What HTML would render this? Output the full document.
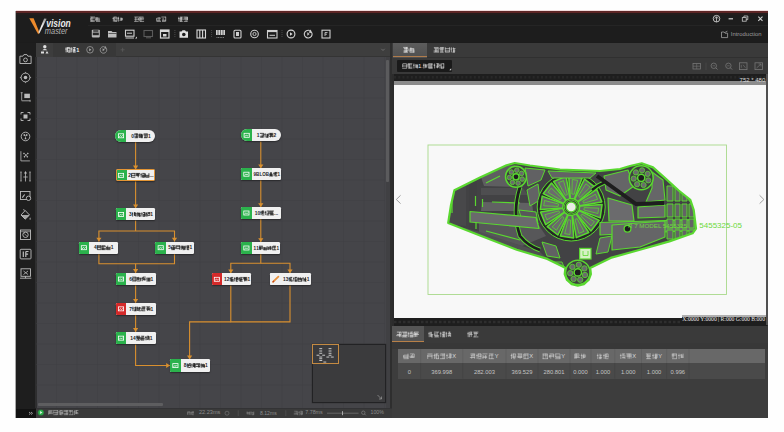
<!DOCTYPE html><html><head><meta charset="utf-8"><style>
html,body{margin:0;padding:0;}
body{width:784px;height:432px;overflow:hidden;position:relative;background:#fefefe;font-family:"Liberation Sans",sans-serif;}
div{box-sizing:border-box;}
.b{position:absolute;border-radius:1px;}
.tx{position:absolute;white-space:nowrap;line-height:1;}
svg{position:absolute;overflow:visible;}
</style></head><body><div id="w" style="position:absolute;left:0;top:0;width:784px;height:432px;">
<div style="position:absolute;left:16px;top:11px;width:752px;height:406.8px;background:#1c1c1c;"></div>
<div style="position:absolute;left:15.2px;top:11px;width:0.8000000000000007px;height:406.8px;background:#a8a8a8;"></div>
<div style="position:absolute;left:16px;top:9.7px;width:752px;height:0.9000000000000004px;background:#f2dcdc;"></div>
<div style="position:absolute;left:16px;top:10.6px;width:752px;height:2.0px;background:#5e2626;"></div>
<div style="position:absolute;left:16px;top:12.6px;width:752px;height:2.0px;background:#241c1c;"></div>
<div style="position:absolute;left:16px;top:14.6px;width:752px;height:27.9px;background:#1d1d1d;"></div>
<div style="position:absolute;left:88px;top:24.8px;width:680px;height:0.8000000000000007px;background:#252525;"></div>
<svg style="left:0;top:0" width="784" height="432">
<defs><linearGradient id="lg1" x1="0" y1="0" x2="0" y2="1"><stop offset="0" stop-color="#9a9a9a"/><stop offset="0.5" stop-color="#f0f0f0"/><stop offset="1" stop-color="#cfcfcf"/></linearGradient></defs>
<path d="M29.3 18.2 L33.6 18.2 L39.6 32.8 L38.2 34.3 Z" fill="#ec8a2c"/>
<path d="M44.2 18.5 L46.6 18.7 L39.4 33.6 L38.4 32.4 Z" fill="url(#lg1)"/>
<text transform="translate(46.2,27.4) scale(0.74,1)" font-family="Liberation Sans" font-size="11.5" font-weight="bold" font-style="italic" fill="#ececec">vision</text>
<text transform="translate(44.8,33.7) scale(0.76,1)" font-family="Liberation Sans" font-size="9.8" font-style="italic" fill="#b4b4b4">master</text>
</svg>
<svg style="left:0;top:0" width="784" height="432"><g fill="#d0d0d0" opacity="1.0" font-family="Liberation Sans"><path d="M90.21 17.05 H94.99 M90.45 20.25 H94.75 M90.78 18.15 H94.75 M90.21 21.35 H94.75 M91.88 16.81 V21.59 M90.69 18.00 V20.40 M95.98 18.15 H99.62 M95.98 21.35 H100.19 M95.41 20.25 H99.95 M95.41 19.20 H99.95 M97.08 17.05 V20.40 M95.89 17.05 V20.40" stroke="#d0d0d0" stroke-width="0.65" fill="none"/></g></svg>
<svg style="left:0;top:0" width="784" height="432"><g fill="#d0d0d0" opacity="1.0" font-family="Liberation Sans"><path d="M113.37 16.81 V21.59 M112.51 18.48 H113.94 M114.57 21.35 H117.05 M114.33 17.05 H116.72 M114.90 18.15 H117.29 M114.57 20.25 H116.72 M114.62 16.81 V21.59 M117.00 17.05 V21.35 M118.57 16.81 V21.59 M117.71 18.48 H119.14 M119.53 20.25 H121.92 M120.10 19.20 H122.49 M120.10 18.15 H122.25 M121.31 18.00 V20.40 M122.20 18.00 V20.40" stroke="#d0d0d0" stroke-width="0.65" fill="none"/></g></svg>
<svg style="left:0;top:0" width="784" height="432"><g fill="#d0d0d0" opacity="1.0" font-family="Liberation Sans"><path d="M134.35 17.05 H138.89 M134.11 21.35 H138.65 M134.35 19.20 H138.89 M138.41 18.00 V20.40 M135.78 17.05 V21.35 M139.88 18.15 H144.09 M139.31 17.05 H143.52 M139.31 19.20 H143.85 M139.88 21.35 H144.09 M139.79 16.81 V21.35 M140.98 18.00 V21.59" stroke="#d0d0d0" stroke-width="0.65" fill="none"/></g></svg>
<svg style="left:0;top:0" width="784" height="432"><g fill="#d0d0d0" opacity="1.0" font-family="Liberation Sans"><path d="M156.21 20.25 H160.42 M156.78 18.15 H160.99 M156.45 21.35 H160.99 M159.08 17.05 V20.40 M156.69 18.00 V20.40 M161.41 17.05 H165.95 M161.98 21.35 H165.62 M161.98 20.25 H165.95 M165.71 16.81 V21.35 M163.08 18.00 V20.40" stroke="#d0d0d0" stroke-width="0.65" fill="none"/></g></svg>
<svg style="left:0;top:0" width="784" height="432"><g fill="#d0d0d0" opacity="1.0" font-family="Liberation Sans"><path d="M178.87 16.81 V21.59 M178.01 18.48 H179.44 M180.07 18.15 H182.55 M180.40 19.20 H182.79 M180.07 17.05 H182.79 M179.83 21.35 H182.79 M180.12 18.00 V21.59 M181.61 17.05 V21.35 M180.86 17.05 V21.59 M183.45 17.05 H187.75 M183.78 18.15 H187.99 M183.78 21.35 H187.75 M183.21 19.20 H187.99 M187.51 17.05 V20.40 M186.08 17.05 V21.59" stroke="#d0d0d0" stroke-width="0.65" fill="none"/></g></svg>
<svg style="left:0;top:0" width="784" height="432">
<circle cx="716.5" cy="18.7" r="3.3" fill="none" stroke="#cfcfcf" stroke-width="0.9"/>
<path d="M716.5 21.9 V17 M714.8 18.6 L716.5 16.7 L718.2 18.6" fill="none" stroke="#cfcfcf" stroke-width="0.8"/>
<path d="M728.6 18.8 H733" stroke="#d0d0d0" stroke-width="1.2"/>
<rect x="742.3" y="17.6" width="3.9" height="3.6" fill="none" stroke="#c8c8c8" stroke-width="0.8"/>
<path d="M743.9 17.6 V16 H747.8 V19.6 H746.2" fill="none" stroke="#c8c8c8" stroke-width="0.8"/>
<path d="M758.3 16.6 L762.5 20.8 M762.5 16.6 L758.3 20.8" stroke="#d0d0d0" stroke-width="1.1"/>
</svg>
<svg style="left:0;top:0" width="784" height="432">
<path d="M721.5 32 V37.6 H727.6 V33.2 H725 L724.2 32 Z M725.2 32.3 L727.4 31.2" fill="none" stroke="#a0a0a0" stroke-width="0.8"/>
</svg>
<div class="tx" style="left:730.8px;top:32.178000000000004px;font-size:5.9px;color:#9c9c9c;">Introduction</div>
<svg style="left:0;top:0" width="784" height="432"><rect x="91.8" y="29.8" width="8" height="7.6" rx="0.8" fill="#b8b8b8"/><rect x="93.2" y="30.2" width="5.2" height="1.6" fill="#3a3a3a"/><rect x="92.8" y="32.6" width="6" height="2.6" fill="#2a2a2a"/><path d="M108 31 H111.5 L112.5 32 H116.5 V37.5 H108 Z" fill="#bdbdbd"/><path d="M108.5 33.5 H116.5" stroke="#1d1d1d" stroke-width="0.6"/><rect x="125.5" y="30.2" width="8.5" height="6" fill="none" stroke="#d0d0d0" stroke-width="1.1"/><path d="M127 33.2 H132" stroke="#d0d0d0" stroke-width="1"/><path d="M125.5 38 H134" stroke="#d0d0d0" stroke-width="1"/><path d="M135 38.5 L137 38.5 L137 36.5 Z" fill="#d0d0d0"/><rect x="144" y="30.5" width="8.5" height="6" fill="none" stroke="#5a5a5a" stroke-width="1.1"/><path d="M146 37.8 H151" stroke="#5a5a5a" stroke-width="1"/><rect x="160.5" y="30" width="8.5" height="8" fill="none" stroke="#d8d8d8" stroke-width="1.2"/><rect x="160.5" y="30" width="8.5" height="2" fill="#d8d8d8"/><rect x="163" y="34" width="3.5" height="2.5" fill="#d8d8d8"/><path d="M174.9 30 V38" stroke="#555" stroke-width="0.8" stroke-dasharray="1 1"/><path d="M179.5 31.5 H181.5 L182.5 30.3 H185 L186 31.5 H188 V37.8 H179.5 Z" fill="#e0e0e0"/><circle cx="183.8" cy="34.5" r="1.8" fill="#1d1d1d"/><rect x="197" y="30" width="8.5" height="8" fill="none" stroke="#d8d8d8" stroke-width="1.1"/><path d="M199.8 30 V38 M202.6 30 V38" stroke="#d8d8d8" stroke-width="1.1"/><path d="M211.6 30 V38" stroke="#555" stroke-width="0.8" stroke-dasharray="1 1"/><rect x="216" y="30" width="9" height="5" fill="#cfcfcf"/><path d="M218 30 V35 M220.5 30 V35 M223 30 V35" stroke="#1d1d1d" stroke-width="0.6"/><path d="M216.5 37.5 H224.5" stroke="#9a9a9a" stroke-width="0.8" stroke-dasharray="1 0.6"/><rect x="234" y="30.2" width="7" height="7.8" rx="1" fill="none" stroke="#d0d0d0" stroke-width="1.1"/><rect x="236" y="32" width="3" height="4" fill="#d0d0d0"/><circle cx="254.5" cy="34" r="3.8" fill="none" stroke="#d0d0d0" stroke-width="1.1"/><circle cx="254.5" cy="34" r="1.6" fill="none" stroke="#d0d0d0" stroke-width="0.9"/><rect x="267.5" y="30.5" width="9.5" height="7.5" fill="none" stroke="#d0d0d0" stroke-width="1.1"/><rect x="267.5" y="30.5" width="9.5" height="1.6" fill="#d0d0d0"/><path d="M269.5 35.3 H275" stroke="#d0d0d0" stroke-width="1"/><path d="M282 30 V38" stroke="#555" stroke-width="0.8" stroke-dasharray="1 1"/><circle cx="291" cy="34" r="3.9" fill="none" stroke="#d8d8d8" stroke-width="1.1"/><path d="M290 32.2 L292.6 34 L290 35.8 Z" fill="#d8d8d8"/><path d="M309.8 30.6 A3.9 3.9 0 1 0 311.9 33" fill="none" stroke="#d0d0d0" stroke-width="1.1"/><path d="M310.6 29.4 L312.4 33.2 L308.6 32.5 Z" fill="#d0d0d0"/><path d="M307.3 32.3 L309.6 34 L307.3 35.7 Z" fill="#d0d0d0"/><rect x="322" y="30.2" width="8" height="7.8" fill="none" stroke="#d0d0d0" stroke-width="1.1"/><path d="M325 32.5 H327.5 M325 32.5 V36 M325 34.2 H327" stroke="#d0d0d0" stroke-width="0.8"/></svg>
<div style="position:absolute;left:16px;top:42.5px;width:19.5px;height:366.3px;background:#1e1e1e;"></div>
<svg style="left:0;top:0" width="784" height="432"><path d="M19.9 56.2 H22.9 L23.9 54.6 H26.9 L27.9 56.2 H31.1 V63.5 H19.9 Z" fill="none" stroke="#bdbdbd" stroke-width="0.9"/><circle cx="25.5" cy="59.9" r="1.9" fill="none" stroke="#bdbdbd" stroke-width="0.9"/><circle cx="25.5" cy="77.5" r="4.4" fill="none" stroke="#bdbdbd" stroke-width="0.9"/><circle cx="25.5" cy="77.5" r="1.8" fill="#bdbdbd"/><path d="M25.5 71.9 V73.1 M25.5 81.9 V83.1 M19.9 77.5 H21.1 M29.9 77.5 H31.1" stroke="#bdbdbd" stroke-width="0.7"/><path d="M21.7 92.7 V100.5 M20.7 92.7 H22.7 M21.7 100.8 H30.1 M30.1 99.8 V101.8" stroke="#bdbdbd" stroke-width="0.8"/><rect x="24.3" y="93.7" width="5.6" height="4.4" fill="#bdbdbd"/><path d="M21.0 114.5 V112.5 H23.5 M27.5 112.5 H30.0 V114.5 M30.0 118.5 V120.5 H27.5 M23.5 120.5 H21.0 V118.5" fill="none" stroke="#bdbdbd" stroke-width="0.9"/><rect x="23.5" y="114.5" width="4" height="4" fill="#bdbdbd"/><circle cx="25.5" cy="136.5" r="4.3" fill="none" stroke="#bdbdbd" stroke-width="0.9"/><path d="M22.9 134.9 L24.9 133.9 L25.5 136.5 Z M28.1 134.9 L26.1 133.9 L25.5 136.5 Z M24.5 139.3 L26.5 139.3 L25.5 136.5 Z" fill="#bdbdbd"/><path d="M20.9 151.2 V160.9 H29.9" fill="none" stroke="#bdbdbd" stroke-width="0.8"/><path d="M23.5 153.0 L28.3 157.8 M28.3 153.0 L23.5 157.8" stroke="#bdbdbd" stroke-width="1.3" stroke-dasharray="1.4 0.9"/><path d="M21.0 172.0 V181.0 M30.0 172.0 V181.0 M20.3 172.0 H21.7 M20.3 181.0 H21.7 M29.3 172.0 H30.7 M29.3 181.0 H30.7 M25.5 173.0 V181.5 M23.3 177.0 H27.7" stroke="#bdbdbd" stroke-width="0.8"/><path d="M24.0 173.5 L25.5 171.0 L27.0 173.5 Z" fill="#bdbdbd"/><rect x="20.5" y="191.5" width="9.5" height="8" fill="none" stroke="#bdbdbd" stroke-width="0.9"/><path d="M22.3 197.7 L24.7 194.5" stroke="#bdbdbd" stroke-width="1.1"/><circle cx="28.5" cy="198.3" r="2.2" fill="#1b1b1b" stroke="#bdbdbd" stroke-width="0.9"/><path d="M21.0 215 L25.2 210.5 L29.5 215 L25.2 219.2 Z" fill="none" stroke="#bdbdbd" stroke-width="0.9"/><path d="M21.0 215 L29.5 215 L25.2 219.2 Z" fill="#bdbdbd" opacity="0.85"/><path d="M30.1 217.3 Q28.9 219.2 30.1 220 Q31.3 219.2 30.1 217.3 Z" fill="#bdbdbd"/><path d="M23.0 209.5 L25.2 210.5" stroke="#bdbdbd" stroke-width="0.7"/><rect x="20.5" y="230.0" width="10" height="9.5" fill="none" stroke="#bdbdbd" stroke-width="0.9"/><circle cx="25.5" cy="234.8" r="2.7" fill="none" stroke="#bdbdbd" stroke-width="0.9"/><path d="M24.0 233.3 L27.0 236.3" stroke="#bdbdbd" stroke-width="0.7"/><path d="M20.5 231.7 H30.5" stroke="#bdbdbd" stroke-width="0.6"/><rect x="20.2" y="249.3" width="10.8" height="9.6" rx="0.8" fill="none" stroke="#bdbdbd" stroke-width="0.9"/><path d="M23.3 251.5 V256.90000000000003 M25.8 251.5 V256.90000000000003 M25.8 251.5 H28.5 M25.8 254.10000000000002 H28.1" stroke="#bdbdbd" stroke-width="1.2"/><rect x="21.0" y="268.8" width="9.5" height="7.5" fill="none" stroke="#bdbdbd" stroke-width="0.9"/><path d="M23.5 271.0 L28.0 274.5 M28.0 271.0 L23.5 274.5" stroke="#bdbdbd" stroke-width="0.8"/><path d="M20.0 278.2 H31.3 M25.5 276.3 V278.2" stroke="#bdbdbd" stroke-width="0.9"/></svg>
<div style="position:absolute;left:35.5px;top:42.5px;width:356.5px;height:14.700000000000003px;background:#383838;"></div>
<div style="position:absolute;left:35.5px;top:42.5px;width:17.5px;height:14.700000000000003px;background:#3d3d3d;"></div>
<div style="position:absolute;left:115.5px;top:42.5px;width:276.5px;height:14.700000000000003px;background:#3e3e3e;"></div>
<div style="position:absolute;left:115.5px;top:56.4px;width:274.0px;height:0.8000000000000043px;background:#343434;"></div>
<div style="position:absolute;left:35.5px;top:57.2px;width:356.5px;height:351.8px;background:#3a3a3a;"></div>
<div style="position:absolute;left:36px;top:57.2px;width:353.5px;height:351.3px;background:#454549;"></div>
<div style="position:absolute;left:35.2px;top:57.2px;width:1.3999999999999986px;height:351.1px;background:#2e2e2f;"></div>
<svg style="left:0;top:0" width="784" height="432"><path d="M56.5 57 V408" stroke="#414145" stroke-width="0.9" opacity="0.5"/><path d="M77.0 57 V408" stroke="#414145" stroke-width="0.9" opacity="0.5"/><path d="M97.5 57 V408" stroke="#414145" stroke-width="0.9" opacity="0.5"/><path d="M118.0 57 V408" stroke="#414145" stroke-width="0.9" opacity="0.5"/><path d="M138.5 57 V408" stroke="#414145" stroke-width="0.9" opacity="0.5"/><path d="M159.0 57 V408" stroke="#414145" stroke-width="0.9" opacity="0.5"/><path d="M179.5 57 V408" stroke="#414145" stroke-width="0.9" opacity="0.5"/><path d="M200.0 57 V408" stroke="#414145" stroke-width="0.9" opacity="0.5"/><path d="M220.5 57 V408" stroke="#414145" stroke-width="0.9" opacity="0.5"/><path d="M241.0 57 V408" stroke="#414145" stroke-width="0.9" opacity="0.5"/><path d="M261.5 57 V408" stroke="#414145" stroke-width="0.9" opacity="0.5"/><path d="M282.0 57 V408" stroke="#414145" stroke-width="0.9" opacity="0.5"/><path d="M302.5 57 V408" stroke="#414145" stroke-width="0.9" opacity="0.5"/><path d="M323.0 57 V408" stroke="#414145" stroke-width="0.9" opacity="0.5"/><path d="M343.5 57 V408" stroke="#414145" stroke-width="0.9" opacity="0.5"/><path d="M364.0 57 V408" stroke="#414145" stroke-width="0.9" opacity="0.5"/><path d="M384.5 57 V408" stroke="#414145" stroke-width="0.9" opacity="0.5"/><path d="M36 77.5 H385" stroke="#414145" stroke-width="0.9" opacity="0.5"/><path d="M36 98.0 H385" stroke="#414145" stroke-width="0.9" opacity="0.5"/><path d="M36 118.5 H385" stroke="#414145" stroke-width="0.9" opacity="0.5"/><path d="M36 139.0 H385" stroke="#414145" stroke-width="0.9" opacity="0.5"/><path d="M36 159.5 H385" stroke="#414145" stroke-width="0.9" opacity="0.5"/><path d="M36 180.0 H385" stroke="#414145" stroke-width="0.9" opacity="0.5"/><path d="M36 200.5 H385" stroke="#414145" stroke-width="0.9" opacity="0.5"/><path d="M36 221.0 H385" stroke="#414145" stroke-width="0.9" opacity="0.5"/><path d="M36 241.5 H385" stroke="#414145" stroke-width="0.9" opacity="0.5"/><path d="M36 262.0 H385" stroke="#414145" stroke-width="0.9" opacity="0.5"/><path d="M36 282.5 H385" stroke="#414145" stroke-width="0.9" opacity="0.5"/><path d="M36 303.0 H385" stroke="#414145" stroke-width="0.9" opacity="0.5"/><path d="M36 323.5 H385" stroke="#414145" stroke-width="0.9" opacity="0.5"/><path d="M36 344.0 H385" stroke="#414145" stroke-width="0.9" opacity="0.5"/><path d="M36 364.5 H385" stroke="#414145" stroke-width="0.9" opacity="0.5"/><path d="M36 385.0 H385" stroke="#414145" stroke-width="0.9" opacity="0.5"/></svg>
<div style="position:absolute;left:385.5px;top:57.2px;width:4.0px;height:351.3px;background:#404043;"></div>
<div style="position:absolute;left:385.8px;top:59.5px;width:3.3999999999999773px;height:122.5px;background:#5b5b5d;border-radius:1px"></div>
<div style="position:absolute;left:389.5px;top:42.5px;width:2.5px;height:375.3px;background:#2e2e2e;"></div>
<div style="position:absolute;left:38px;top:403.2px;width:125px;height:2.6000000000000227px;background:#5e5e60;border-radius:1px"></div>
<svg style="left:0;top:0" width="784" height="432"><circle cx="44.8" cy="46.8" r="1.7" fill="#e0e0e0"/><path d="M42.3 50.2 Q44.8 48 47.3 50.2 Z" fill="#e0e0e0"/><path d="M41 53.5 H44 V51.5 H41 Z M45.5 53.5 H48.5 L47 51 Z" fill="#e0e0e0"/><circle cx="90" cy="49.8" r="3.3" fill="none" stroke="#9a9a9a" stroke-width="0.8"/><path d="M89.2 48.3 L91.4 49.8 L89.2 51.3 Z" fill="#aaa"/><path d="M104.8 46.9 A3.3 3.3 0 1 0 106.5 48.6" fill="none" stroke="#9a9a9a" stroke-width="0.8"/><path d="M105.6 45.9 L106.9 48.9 L103.9 48.2 Z" fill="#9a9a9a"/><path d="M102.6 48.3 L104.8 49.8 L102.6 51.3 Z" fill="#aaa"/><path d="M120.6 49.8 H124.6 M122.6 47.8 V51.8" stroke="#5a5a5a" stroke-width="0.8"/><path d="M381.3 48.8 L383 50.5 L384.7 48.8" fill="none" stroke="#777" stroke-width="0.8"/></svg>
<svg style="left:0;top:0" width="784" height="432"><g fill="#f0f0f0" opacity="1.0" font-family="Liberation Sans"><text x="76.20" y="51.82" font-size="5.6" font-weight="bold">1</text><path d="M66.15 47.22 V52.38 M65.22 49.03 H66.77 M67.80 52.12 H70.38 M67.44 47.48 H69.76 M67.80 50.93 H70.38 M67.18 48.67 H70.38 M70.06 47.48 V52.38 M67.50 47.22 V52.12 M71.75 47.22 V52.38 M70.82 49.03 H72.37 M73.04 49.80 H75.36 M73.04 47.48 H75.72 M73.04 52.12 H75.72 M72.78 50.93 H75.72 M74.70 47.48 V51.09 M73.90 48.51 V52.12" stroke="#f0f0f0" stroke-width="0.75" fill="none"/></g></svg>
<svg style="left:0;top:0" width="784" height="432"><path d="M135.6 141.7 L135.6 169.4" fill="none" stroke="#d9902f" stroke-width="1.1"/><path d="M133.0 165.6 L138.2 165.6 L135.6 169.4 Z" fill="#d9902f"/><path d="M135.6 181.2 L135.6 208.3" fill="none" stroke="#d9902f" stroke-width="1.1"/><path d="M133.0 204.5 L138.2 204.5 L135.6 208.3 Z" fill="#d9902f"/><path d="M135.6 220.5 L135.6 231" fill="none" stroke="#d9902f" stroke-width="1.1"/><path d="M98.9 241.5 L98.9 231 L174.5 231 L174.5 241.5" fill="none" stroke="#d9902f" stroke-width="1.1"/><path d="M96.30000000000001 237.7 L101.5 237.7 L98.9 241.5 Z" fill="#d9902f"/><path d="M171.9 237.7 L177.1 237.7 L174.5 241.5 Z" fill="#d9902f"/><path d="M98.9 253.9 L98.9 263.7 L174.5 263.7 L174.5 253.9" fill="none" stroke="#d9902f" stroke-width="1.1"/><path d="M135.6 263.7 L135.6 272.9" fill="none" stroke="#d9902f" stroke-width="1.1"/><path d="M133.0 269.09999999999997 L138.2 269.09999999999997 L135.6 272.9 Z" fill="#d9902f"/><path d="M135.6 285.2 L135.6 302.7" fill="none" stroke="#d9902f" stroke-width="1.1"/><path d="M133.0 298.9 L138.2 298.9 L135.6 302.7 Z" fill="#d9902f"/><path d="M135.6 315 L135.6 331.9" fill="none" stroke="#d9902f" stroke-width="1.1"/><path d="M133.0 328.09999999999997 L138.2 328.09999999999997 L135.6 331.9 Z" fill="#d9902f"/><path d="M135.6 344.4 L135.6 365.5 L170 365.5" fill="none" stroke="#d9902f" stroke-width="1.1"/><path d="M166.2 362.9 L166.2 368.1 L170 365.5 Z" fill="#d9902f"/><path d="M260.8 141.4 L260.8 168.2" fill="none" stroke="#d9902f" stroke-width="1.1"/><path d="M258.2 164.39999999999998 L263.40000000000003 164.39999999999998 L260.8 168.2 Z" fill="#d9902f"/><path d="M260.8 180.2 L260.8 207" fill="none" stroke="#d9902f" stroke-width="1.1"/><path d="M258.2 203.2 L263.40000000000003 203.2 L260.8 207 Z" fill="#d9902f"/><path d="M260.8 219 L260.8 242" fill="none" stroke="#d9902f" stroke-width="1.1"/><path d="M258.2 238.2 L263.40000000000003 238.2 L260.8 242 Z" fill="#d9902f"/><path d="M260.8 254 L260.8 263.3" fill="none" stroke="#d9902f" stroke-width="1.1"/><path d="M230.8 273.2 L230.8 263.3 L290 263.3 L290 273.2" fill="none" stroke="#d9902f" stroke-width="1.1"/><path d="M228.20000000000002 269.4 L233.4 269.4 L230.8 273.2 Z" fill="#d9902f"/><path d="M287.4 269.4 L292.6 269.4 L290 273.2 Z" fill="#d9902f"/><path d="M230.8 285.4 L230.8 321.9 L290 321.9 L290 285.4" fill="none" stroke="#d9902f" stroke-width="1.1"/><path d="M230.8 321.9 L189.6 321.9 L189.6 359.4" fill="none" stroke="#d9902f" stroke-width="1.1"/><path d="M187.0 355.59999999999997 L192.2 355.59999999999997 L189.6 359.4 Z" fill="#d9902f"/></svg>
<div style="position:absolute;left:115.3px;top:129.8px;width:39.8px;height:12.0px;background:#f0f0f0;border-radius:6.0px;box-shadow:0 1px 1.5px rgba(0,0,0,0.4);overflow:hidden"><div style="position:absolute;left:0;top:0;width:10.8px;height:100%;background:#2bb24c"></div></div>
<svg style="left:0;top:0" width="784" height="432"><rect x="118.40" y="133.80" width="5.2" height="4" fill="none" stroke="#ffffff" stroke-width="0.8"/><path d="M119.20 137.10 L120.50 135.50 L121.60 136.60 L122.80 135.20" fill="none" stroke="#ffffff" stroke-width="0.7"/></svg>
<svg style="left:0;top:0" width="784" height="432"><g fill="#1e1e1e" opacity="1.0" font-family="Liberation Sans"><text x="131.19" y="137.56" font-size="4.9" font-weight="bold">0</text><text x="147.88" y="137.56" font-size="4.9" font-weight="bold">1</text><path d="M134.62 137.73 H137.87 M134.32 133.87 H137.87 M134.32 136.74 H137.87 M134.10 134.86 H138.17 M136.67 133.66 V137.73 M137.96 133.87 V137.73 M139.53 133.66 V137.94 M138.76 135.16 H140.04 M140.90 134.86 H142.53 M140.60 135.80 H143.04 M140.60 136.74 H142.83 M140.60 137.73 H142.83 M141.32 133.87 V137.73 M141.98 133.87 V137.73 M140.65 133.66 V137.73 M143.93 137.73 H147.18 M143.63 133.87 H147.48 M143.41 134.86 H147.18 M147.27 133.66 V137.73 M144.91 134.73 V137.94 M145.98 134.73 V137.94" stroke="#1e1e1e" stroke-width="0.78" fill="none"/></g></svg>
<div style="position:absolute;left:241px;top:129.2px;width:39.5px;height:12.200000000000017px;background:#f0f0f0;border-radius:6.1000000000000085px;box-shadow:0 1px 1.5px rgba(0,0,0,0.4);overflow:hidden"><div style="position:absolute;left:0;top:0;width:10.8px;height:100%;background:#2bb24c"></div></div>
<svg style="left:0;top:0" width="784" height="432"><rect x="244.10" y="133.30" width="5.2" height="4" fill="none" stroke="#ffffff" stroke-width="0.8"/><path d="M244.90 136.60 L246.20 135.00 L247.30 136.10 L248.50 134.70" fill="none" stroke="#ffffff" stroke-width="0.7"/></svg>
<svg style="left:0;top:0" width="784" height="432"><g fill="#1e1e1e" opacity="1.0" font-family="Liberation Sans"><text x="256.74" y="137.06" font-size="4.9" font-weight="bold">1</text><text x="273.43" y="137.06" font-size="4.9" font-weight="bold">2</text><path d="M260.17 136.24 H263.72 M259.87 133.37 H263.72 M260.17 137.23 H263.72 M262.22 134.23 V137.23 M263.51 133.37 V136.37 M265.08 133.16 V137.44 M264.31 134.66 H265.59 M266.45 135.30 H268.08 M265.94 137.23 H268.59 M266.45 134.36 H268.08 M265.94 136.24 H268.38 M268.33 133.37 V136.37 M267.53 134.23 V137.44 M269.18 133.37 H273.25 M269.18 136.24 H273.25 M269.18 134.36 H273.03 M271.53 133.37 V136.37 M270.46 133.16 V137.44 M272.82 134.23 V137.23" stroke="#1e1e1e" stroke-width="0.78" fill="none"/></g></svg>
<div style="position:absolute;left:115.6px;top:169.4px;width:39.20000000000002px;height:11.900000000000006px;background:#f0f0f0;border-radius:1.2px;border:1.3px solid #e39535;box-shadow:0 1px 1.5px rgba(0,0,0,0.4);overflow:hidden"><div style="position:absolute;left:0;top:0;width:10.8px;height:100%;background:#2bb24c"></div></div>
<svg style="left:0;top:0" width="784" height="432"><rect x="118.40" y="173.35" width="5.2" height="4" fill="none" stroke="#ffffff" stroke-width="0.8"/><path d="M119.20 176.65 L120.50 175.05 L121.60 176.15 L122.80 174.75" fill="none" stroke="#ffffff" stroke-width="0.7"/></svg>
<svg style="left:0;top:0" width="784" height="432"><g fill="#1e1e1e" opacity="1.0" font-family="Liberation Sans"><text x="128.20" y="177.11" font-size="4.89446903320989" font-weight="bold">2</text><text x="149.52" y="177.11" font-size="4.89446903320989" font-weight="bold">.</text><text x="150.88" y="177.11" font-size="4.89446903320989" font-weight="bold">.</text><text x="152.24" y="177.11" font-size="4.89446903320989" font-weight="bold">.</text><path d="M131.32 177.27 H135.17 M131.62 173.43 H135.39 M131.11 175.35 H135.39 M134.96 173.21 V176.42 M131.54 173.21 V177.27 M135.76 173.43 H140.04 M135.97 175.35 H139.52 M135.97 174.41 H139.52 M137.25 173.21 V176.42 M138.32 173.43 V177.27 M141.18 173.21 V177.49 M140.41 174.71 H141.69 M142.25 175.35 H144.69 M142.25 177.27 H144.69 M142.25 173.43 H144.69 M142.03 176.29 H144.69 M144.42 173.43 V177.27 M142.96 174.28 V177.27 M145.27 175.35 H148.82 M145.57 177.27 H149.33 M145.57 176.29 H149.33 M145.48 173.43 V177.27 M148.91 173.21 V176.42" stroke="#1e1e1e" stroke-width="0.78" fill="none"/></g></svg>
<div style="position:absolute;left:241px;top:168.2px;width:39.5px;height:12.0px;background:#f0f0f0;border-radius:1.2px;box-shadow:0 1px 1.5px rgba(0,0,0,0.4);overflow:hidden"><div style="position:absolute;left:0;top:0;width:10.8px;height:100%;background:#2bb24c"></div></div>
<svg style="left:0;top:0" width="784" height="432"><rect x="243.80" y="172.20" width="5.2" height="4" fill="none" stroke="#ffffff" stroke-width="0.8"/><path d="M244.60 175.50 L245.90 173.90 L247.00 175.00 L248.20 173.60" fill="none" stroke="#ffffff" stroke-width="0.7"/></svg>
<svg style="left:0;top:0" width="784" height="432"><g fill="#1e1e1e" opacity="1.0" font-family="Liberation Sans"><text x="253.60" y="175.83" font-size="4.5245234231012565" font-weight="bold">9</text><text x="256.12" y="175.83" font-size="4.5245234231012565" font-weight="bold">B</text><text x="259.38" y="175.83" font-size="4.5245234231012565" font-weight="bold">L</text><text x="262.15" y="175.83" font-size="4.5245234231012565" font-weight="bold">O</text><text x="265.67" y="175.83" font-size="4.5245234231012565" font-weight="bold">B</text><text x="277.53" y="175.83" font-size="4.5245234231012565" font-weight="bold">1</text><path d="M269.58 175.07 H272.86 M269.11 174.20 H272.59 M269.11 175.98 H273.06 M270.49 172.22 V175.98 M271.48 172.22 V176.18 M274.12 172.22 V176.18 M273.40 173.61 H274.59 M274.91 175.98 H277.36 M274.91 172.42 H277.36 M275.38 175.07 H276.88 M274.91 173.33 H277.36 M275.76 172.42 V175.19 M275.15 172.42 V175.19" stroke="#1e1e1e" stroke-width="0.78" fill="none"/></g></svg>
<div style="position:absolute;left:115.6px;top:208.4px;width:39.400000000000006px;height:12.099999999999994px;background:#f0f0f0;border-radius:1.2px;box-shadow:0 1px 1.5px rgba(0,0,0,0.4);overflow:hidden"><div style="position:absolute;left:0;top:0;width:10.8px;height:100%;background:#2bb24c"></div></div>
<svg style="left:0;top:0" width="784" height="432"><rect x="118.40" y="212.45" width="5.2" height="4" fill="none" stroke="#ffffff" stroke-width="0.8"/><path d="M119.20 215.75 L120.50 214.15 L121.60 215.25 L122.80 213.85" fill="none" stroke="#ffffff" stroke-width="0.7"/></svg>
<svg style="left:0;top:0" width="784" height="432"><g fill="#1e1e1e" opacity="1.0" font-family="Liberation Sans"><text x="128.97" y="216.21" font-size="4.9" font-weight="bold">3</text><text x="150.31" y="216.21" font-size="4.9" font-weight="bold">1</text><path d="M132.65 212.31 V216.59 M131.88 213.81 H133.16 M134.02 213.51 H136.16 M134.02 214.45 H135.64 M134.02 212.52 H135.64 M134.02 215.39 H136.16 M135.89 213.38 V216.59 M134.43 212.52 V215.52 M137.30 212.31 V216.59 M136.53 213.81 H137.82 M138.67 214.45 H140.30 M138.16 213.51 H140.60 M138.67 216.38 H140.60 M138.16 215.39 H140.81 M139.75 212.52 V216.38 M138.42 212.52 V215.52 M141.96 212.31 V216.59 M141.19 213.81 H142.47 M143.03 212.52 H144.95 M142.81 215.39 H145.47 M142.81 216.38 H144.95 M142.81 214.45 H145.25 M145.20 212.31 V216.59 M144.41 212.31 V215.52 M146.61 212.31 V216.59 M145.84 213.81 H147.13 M147.47 212.52 H150.12 M147.98 213.51 H149.91 M147.68 215.39 H149.91 M149.86 212.31 V215.52 M147.73 213.38 V216.38" stroke="#1e1e1e" stroke-width="0.78" fill="none"/></g></svg>
<div style="position:absolute;left:241px;top:207px;width:39.5px;height:12px;background:#f0f0f0;border-radius:1.2px;box-shadow:0 1px 1.5px rgba(0,0,0,0.4);overflow:hidden"><div style="position:absolute;left:0;top:0;width:10.8px;height:100%;background:#2bb24c"></div></div>
<svg style="left:0;top:0" width="784" height="432"><rect x="243.80" y="211.00" width="5.2" height="4" fill="none" stroke="#ffffff" stroke-width="0.8"/><path d="M244.60 214.30 L245.90 212.70 L247.00 213.80 L248.20 212.40" fill="none" stroke="#ffffff" stroke-width="0.7"/></svg>
<svg style="left:0;top:0" width="784" height="432"><g fill="#1e1e1e" opacity="1.0" font-family="Liberation Sans"><text x="254.70" y="214.76" font-size="4.9" font-weight="bold">1</text><text x="257.43" y="214.76" font-size="4.9" font-weight="bold">0</text><text x="274.12" y="214.76" font-size="4.9" font-weight="bold">.</text><text x="275.48" y="214.76" font-size="4.9" font-weight="bold">.</text><text x="276.84" y="214.76" font-size="4.9" font-weight="bold">.</text><path d="M261.11 210.86 V215.14 M260.34 212.36 H261.62 M262.48 212.06 H264.41 M261.96 211.07 H264.11 M262.18 213.00 H264.62 M261.96 214.93 H264.41 M262.23 210.86 V214.07 M262.89 210.86 V214.07 M265.76 210.86 V215.14 M264.99 212.36 H266.28 M266.83 211.07 H269.27 M266.62 214.93 H269.27 M266.62 213.94 H268.76 M269.01 210.86 V214.07 M268.21 211.93 V214.07 M270.16 213.94 H273.72 M269.86 214.93 H273.93 M269.65 213.00 H273.42 M269.65 211.07 H273.93 M271.15 211.07 V214.93 M270.07 210.86 V214.07 M272.22 210.86 V215.14" stroke="#1e1e1e" stroke-width="0.78" fill="none"/></g></svg>
<div style="position:absolute;left:78.5px;top:241.5px;width:39.099999999999994px;height:12.400000000000006px;background:#f0f0f0;border-radius:1.2px;box-shadow:0 1px 1.5px rgba(0,0,0,0.4);overflow:hidden"><div style="position:absolute;left:0;top:0;width:10.8px;height:100%;background:#2bb24c"></div></div>
<svg style="left:0;top:0" width="784" height="432"><rect x="81.30" y="245.70" width="5.2" height="4" fill="none" stroke="#ffffff" stroke-width="0.8"/><path d="M82.10 249.00 L83.40 247.40 L84.50 248.50 L85.70 247.10" fill="none" stroke="#ffffff" stroke-width="0.7"/></svg>
<svg style="left:0;top:0" width="784" height="432"><g fill="#1e1e1e" opacity="1.0" font-family="Liberation Sans"><text x="94.04" y="249.46" font-size="4.9" font-weight="bold">4</text><text x="110.73" y="249.46" font-size="4.9" font-weight="bold">1</text><path d="M97.17 247.70 H100.72 M96.95 245.77 H101.02 M97.47 249.63 H101.24 M97.47 246.76 H100.72 M100.81 245.56 V248.77 M97.38 245.56 V249.84 M101.61 245.77 H105.38 M101.61 246.76 H105.89 M101.61 249.63 H105.68 M101.82 248.64 H105.89 M102.04 245.77 V249.84 M103.11 246.63 V249.84 M106.26 247.70 H110.03 M106.48 249.63 H110.55 M106.78 248.64 H110.03 M107.76 245.56 V248.77 M106.69 246.63 V249.63 M110.12 246.63 V248.77" stroke="#1e1e1e" stroke-width="0.78" fill="none"/></g></svg>
<div style="position:absolute;left:155.3px;top:241.5px;width:38.5px;height:12.400000000000006px;background:#f0f0f0;border-radius:1.2px;box-shadow:0 1px 1.5px rgba(0,0,0,0.4);overflow:hidden"><div style="position:absolute;left:0;top:0;width:10.8px;height:100%;background:#2bb24c"></div></div>
<svg style="left:0;top:0" width="784" height="432"><rect x="158.10" y="245.70" width="5.2" height="4" fill="none" stroke="#ffffff" stroke-width="0.8"/><path d="M158.90 249.00 L160.20 247.40 L161.30 248.50 L162.50 247.10" fill="none" stroke="#ffffff" stroke-width="0.7"/></svg>
<svg style="left:0;top:0" width="784" height="432"><g fill="#1e1e1e" opacity="1.0" font-family="Liberation Sans"><text x="168.22" y="249.46" font-size="4.9" font-weight="bold">5</text><text x="189.56" y="249.46" font-size="4.9" font-weight="bold">1</text><path d="M171.34 248.64 H175.41 M171.34 249.63 H174.89 M171.64 245.77 H175.41 M171.34 247.70 H175.41 M173.70 245.77 V249.84 M174.98 246.63 V248.77 M171.55 246.63 V248.77 M176.30 248.64 H179.85 M175.78 245.77 H180.06 M175.78 246.76 H179.85 M176.21 246.63 V248.77 M179.64 245.77 V249.63 M181.21 245.56 V249.84 M180.44 247.06 H181.72 M182.58 249.63 H184.72 M182.06 247.70 H184.50 M182.28 246.76 H184.20 M182.58 248.64 H184.72 M182.99 245.56 V248.77 M182.33 245.77 V248.77 M184.45 245.77 V249.63 M185.86 245.56 V249.84 M185.09 247.06 H186.38 M186.72 246.76 H189.16 M187.23 247.70 H189.37 M187.23 249.63 H189.16 M186.72 245.77 H189.37 M188.31 245.77 V248.77 M187.65 246.63 V249.84" stroke="#1e1e1e" stroke-width="0.78" fill="none"/></g></svg>
<div style="position:absolute;left:241px;top:242px;width:39.39999999999998px;height:12px;background:#f0f0f0;border-radius:1.2px;box-shadow:0 1px 1.5px rgba(0,0,0,0.4);overflow:hidden"><div style="position:absolute;left:0;top:0;width:10.8px;height:100%;background:#2bb24c"></div></div>
<svg style="left:0;top:0" width="784" height="432"><rect x="243.80" y="246.00" width="5.2" height="4" fill="none" stroke="#ffffff" stroke-width="0.8"/><path d="M244.60 249.30 L245.90 247.70 L247.00 248.80 L248.20 247.40" fill="none" stroke="#ffffff" stroke-width="0.7"/></svg>
<svg style="left:0;top:0" width="784" height="432"><g fill="#1e1e1e" opacity="1.0" font-family="Liberation Sans"><text x="253.60" y="249.69" font-size="4.6815441323541975" font-weight="bold">1</text><text x="256.20" y="249.69" font-size="4.6815441323541975" font-weight="bold">1</text><text x="276.60" y="249.69" font-size="4.6815441323541975" font-weight="bold">1</text><path d="M259.48 248.00 H263.08 M258.98 247.10 H263.08 M258.98 246.16 H262.87 M259.48 248.90 H262.87 M260.42 246.98 V250.05 M259.39 246.98 V249.84 M263.64 249.84 H267.03 M263.64 248.90 H267.32 M263.92 248.00 H267.32 M267.11 246.16 V249.84 M263.84 246.98 V250.05 M264.86 246.98 V249.84 M268.37 248.90 H271.97 M268.37 247.10 H271.77 M268.37 248.00 H271.48 M268.29 246.98 V250.05 M270.33 245.95 V250.05 M272.33 247.10 H275.93 M272.33 249.84 H276.21 M272.82 246.16 H275.93 M272.74 246.16 V249.84 M274.78 246.16 V249.84" stroke="#1e1e1e" stroke-width="0.78" fill="none"/></g></svg>
<div style="position:absolute;left:115.6px;top:272.9px;width:40.0px;height:12.300000000000011px;background:#f0f0f0;border-radius:1.2px;box-shadow:0 1px 1.5px rgba(0,0,0,0.4);overflow:hidden"><div style="position:absolute;left:0;top:0;width:10.8px;height:100%;background:#2bb24c"></div></div>
<svg style="left:0;top:0" width="784" height="432"><rect x="118.40" y="277.05" width="5.2" height="4" fill="none" stroke="#ffffff" stroke-width="0.8"/><path d="M119.20 280.35 L120.50 278.75 L121.60 279.85 L122.80 278.45" fill="none" stroke="#ffffff" stroke-width="0.7"/></svg>
<svg style="left:0;top:0" width="784" height="432"><g fill="#1e1e1e" opacity="1.0" font-family="Liberation Sans"><text x="129.27" y="280.81" font-size="4.9" font-weight="bold">6</text><text x="150.61" y="280.81" font-size="4.9" font-weight="bold">1</text><path d="M132.69 278.11 H136.24 M132.39 279.99 H136.46 M132.18 277.12 H136.24 M132.18 280.98 H136.24 M136.03 277.12 V281.19 M132.60 277.98 V280.12 M136.83 278.11 H140.90 M137.35 279.05 H141.11 M137.05 280.98 H140.60 M140.69 277.98 V280.98 M137.26 277.12 V280.12 M138.33 276.91 V280.12 M142.26 276.91 V281.19 M141.49 278.41 H142.77 M143.11 277.12 H145.77 M143.11 279.05 H145.77 M143.63 279.99 H145.55 M144.71 277.98 V280.12 M143.38 276.91 V280.12 M146.66 279.99 H149.91 M146.36 280.98 H150.21 M146.14 279.05 H150.21 M146.36 278.11 H150.42 M148.71 277.98 V281.19 M150.00 277.98 V281.19" stroke="#1e1e1e" stroke-width="0.78" fill="none"/></g></svg>
<div style="position:absolute;left:211.5px;top:273.2px;width:39.75px;height:12.199999999999989px;background:#f0f0f0;border-radius:1.2px;box-shadow:0 1px 1.5px rgba(0,0,0,0.4);overflow:hidden"><div style="position:absolute;left:0;top:0;width:10.8px;height:100%;background:#d42a2a"></div></div>
<svg style="left:0;top:0" width="784" height="432"><rect x="214.30" y="277.30" width="5.2" height="4" fill="none" stroke="#ffffff" stroke-width="0.8"/><path d="M215.10 280.60 L216.40 279.00 L217.50 280.10 L218.70 278.70" fill="none" stroke="#ffffff" stroke-width="0.7"/></svg>
<svg style="left:0;top:0" width="784" height="432"><g fill="#1e1e1e" opacity="1.0" font-family="Liberation Sans"><text x="224.10" y="281.01" font-size="4.745549618538731" font-weight="bold">1</text><text x="226.74" y="281.01" font-size="4.745549618538731" font-weight="bold">2</text><text x="247.41" y="281.01" font-size="4.745549618538731" font-weight="bold">1</text><path d="M230.30 277.23 V281.37 M229.56 278.68 H230.80 M231.13 279.30 H233.71 M231.13 280.21 H233.71 M231.13 281.17 H233.71 M231.13 277.43 H233.21 M232.03 278.26 V281.17 M231.39 277.43 V281.37 M234.81 277.23 V281.37 M234.07 278.68 H235.31 M235.64 278.39 H238.01 M235.85 281.17 H238.01 M235.85 279.30 H238.21 M236.14 277.43 H238.01 M236.54 277.43 V281.37 M237.96 277.43 V280.34 M239.32 277.23 V281.37 M238.57 278.68 H239.82 M240.15 277.43 H242.72 M240.15 281.17 H242.72 M240.36 279.30 H242.72 M241.05 278.26 V281.37 M241.69 278.26 V280.34 M240.41 278.26 V281.37 M243.08 277.43 H247.23 M243.58 279.30 H247.23 M243.08 278.39 H246.73 M246.82 278.26 V281.17 M245.57 277.43 V281.17 M244.53 277.23 V281.37" stroke="#1e1e1e" stroke-width="0.78" fill="none"/></g></svg>
<div style="position:absolute;left:270.4px;top:273.2px;width:40.200000000000045px;height:12.199999999999989px;background:#f0f0f0;border-radius:1.2px;box-shadow:0 1px 1.5px rgba(0,0,0,0.4);overflow:hidden"><div style="position:absolute;left:0;top:0;width:10.8px;height:100%;background:#f0f0f0"></div></div>
<svg style="left:0;top:0" width="784" height="432"><path d="M273.00 281.90 L278.40 276.70" stroke="#e8903a" stroke-width="1.8" stroke-linecap="round"/><path d="M272.80 282.20 L274.00 280.80" stroke="#c04020" stroke-width="1.2"/></svg>
<svg style="left:0;top:0" width="784" height="432"><g fill="#1e1e1e" opacity="1.0" font-family="Liberation Sans"><text x="283.00" y="281.04" font-size="4.827842386490278" font-weight="bold">1</text><text x="285.68" y="281.04" font-size="4.827842386490278" font-weight="bold">3</text><text x="306.72" y="281.04" font-size="4.827842386490278" font-weight="bold">1</text><path d="M289.31 277.19 V281.41 M288.55 278.67 H289.82 M290.66 281.20 H292.56 M290.16 277.40 H292.27 M290.66 280.23 H292.77 M290.42 278.25 V281.20 M291.07 277.19 V280.35 M293.90 277.19 V281.41 M293.14 278.67 H294.41 M294.95 280.23 H297.36 M294.74 281.20 H297.36 M294.74 277.40 H297.15 M295.66 277.19 V281.41 M297.10 278.25 V280.35 M297.73 281.20 H301.95 M297.73 278.37 H301.44 M297.94 279.30 H301.95 M301.52 278.25 V281.20 M300.26 277.40 V280.35 M298.15 277.19 V281.20 M303.07 277.19 V281.41 M302.31 278.67 H303.58 M304.42 281.20 H306.53 M303.92 279.30 H306.53 M303.92 280.23 H306.03 M304.83 278.25 V280.35 M305.49 277.19 V281.20" stroke="#1e1e1e" stroke-width="0.78" fill="none"/></g></svg>
<div style="position:absolute;left:115.6px;top:302.7px;width:40.0px;height:12.300000000000011px;background:#f0f0f0;border-radius:1.2px;box-shadow:0 1px 1.5px rgba(0,0,0,0.4);overflow:hidden"><div style="position:absolute;left:0;top:0;width:10.8px;height:100%;background:#d42a2a"></div></div>
<svg style="left:0;top:0" width="784" height="432"><rect x="118.40" y="306.85" width="5.2" height="4" fill="none" stroke="#ffffff" stroke-width="0.8"/><path d="M119.20 310.15 L120.50 308.55 L121.60 309.65 L122.80 308.25" fill="none" stroke="#ffffff" stroke-width="0.7"/></svg>
<svg style="left:0;top:0" width="784" height="432"><g fill="#1e1e1e" opacity="1.0" font-family="Liberation Sans"><text x="129.27" y="310.61" font-size="4.9" font-weight="bold">7</text><text x="150.61" y="310.61" font-size="4.9" font-weight="bold">1</text><path d="M132.95 306.71 V310.99 M132.18 308.21 H133.46 M133.80 307.91 H136.24 M134.32 309.79 H136.24 M133.80 310.78 H136.46 M135.40 306.71 V310.99 M136.19 306.71 V310.78 M137.60 306.71 V310.99 M136.83 308.21 H138.12 M138.67 310.78 H140.90 M138.97 308.85 H140.60 M138.46 307.91 H141.11 M138.72 307.78 V310.99 M139.39 306.92 V309.92 M142.00 307.91 H145.25 M141.49 310.78 H145.25 M141.70 308.85 H145.25 M141.70 306.92 H145.55 M141.91 307.78 V310.99 M144.06 306.71 V309.92 M146.14 306.92 H150.21 M146.66 309.79 H149.91 M146.14 308.85 H150.42 M147.64 306.71 V310.78 M148.71 306.92 V309.92 M150.00 307.78 V310.78" stroke="#1e1e1e" stroke-width="0.78" fill="none"/></g></svg>
<div style="position:absolute;left:115.6px;top:331.9px;width:40.0px;height:12.5px;background:#f0f0f0;border-radius:1.2px;box-shadow:0 1px 1.5px rgba(0,0,0,0.4);overflow:hidden"><div style="position:absolute;left:0;top:0;width:10.8px;height:100%;background:#2bb24c"></div></div>
<svg style="left:0;top:0" width="784" height="432"><rect x="118.40" y="336.15" width="5.2" height="4" fill="none" stroke="#ffffff" stroke-width="0.8"/><path d="M119.20 339.45 L120.50 337.85 L121.60 338.95 L122.80 337.55" fill="none" stroke="#ffffff" stroke-width="0.7"/></svg>
<svg style="left:0;top:0" width="784" height="432"><g fill="#1e1e1e" opacity="1.0" font-family="Liberation Sans"><text x="130.23" y="339.91" font-size="4.9" font-weight="bold">1</text><text x="132.96" y="339.91" font-size="4.9" font-weight="bold">4</text><text x="149.64" y="339.91" font-size="4.9" font-weight="bold">1</text><path d="M136.38 338.15 H140.15 M135.87 337.21 H140.15 M136.08 336.22 H140.15 M136.08 340.08 H140.15 M138.44 337.08 V340.08 M137.37 336.22 V339.22 M139.72 337.08 V339.22 M140.52 339.09 H144.59 M141.04 340.08 H144.29 M140.52 338.15 H144.80 M141.04 336.22 H144.29 M142.02 337.08 V339.22 M143.09 336.01 V339.22 M140.95 337.08 V340.29 M145.95 336.01 V340.29 M145.18 337.51 H146.46 M146.80 336.22 H148.94 M147.02 339.09 H148.94 M147.32 337.21 H148.94 M148.40 336.01 V339.22 M147.07 337.08 V340.08 M149.19 336.22 V340.29" stroke="#1e1e1e" stroke-width="0.78" fill="none"/></g></svg>
<div style="position:absolute;left:170px;top:359.4px;width:40px;height:12.400000000000034px;background:#f0f0f0;border-radius:1.2px;box-shadow:0 1px 1.5px rgba(0,0,0,0.4);overflow:hidden"><div style="position:absolute;left:0;top:0;width:10.8px;height:100%;background:#2bb24c"></div></div>
<svg style="left:0;top:0" width="784" height="432"><rect x="172.80" y="363.60" width="5.2" height="4" fill="none" stroke="#ffffff" stroke-width="0.8"/><path d="M173.60 366.90 L174.90 365.30 L176.00 366.40 L177.20 365.00" fill="none" stroke="#ffffff" stroke-width="0.7"/></svg>
<svg style="left:0;top:0" width="784" height="432"><g fill="#1e1e1e" opacity="1.0" font-family="Liberation Sans"><text x="183.67" y="367.36" font-size="4.9" font-weight="bold">8</text><text x="205.01" y="367.36" font-size="4.9" font-weight="bold">1</text><path d="M187.35 363.46 V367.74 M186.58 364.96 H187.86 M188.20 367.53 H190.64 M188.20 364.66 H190.64 M188.20 365.60 H190.64 M188.72 363.67 H190.86 M188.47 364.53 V366.67 M190.59 364.53 V366.67 M192.00 363.46 V367.74 M191.23 364.96 H192.52 M193.37 364.66 H195.51 M192.86 365.60 H195.00 M193.07 363.67 H195.51 M193.07 366.54 H195.30 M195.25 363.67 V367.74 M193.79 363.67 V366.67 M194.45 363.46 V367.74 M196.10 363.67 H200.17 M195.89 366.54 H199.95 M195.89 364.66 H200.17 M198.46 364.53 V367.53 M199.74 364.53 V367.53 M201.31 363.46 V367.74 M200.54 364.96 H201.83 M202.17 364.66 H204.61 M202.68 365.60 H204.61 M202.68 366.54 H204.82 M203.10 363.67 V367.74 M202.43 364.53 V366.67 M204.56 364.53 V367.74" stroke="#1e1e1e" stroke-width="0.78" fill="none"/></g></svg>
<div style="position:absolute;left:312px;top:343.7px;width:73.5px;height:59.10000000000002px;background:#3b3b3d;border:1px solid #222224;box-shadow:0 0 1px rgba(0,0,0,0.5)"></div>
<div style="position:absolute;left:312.3px;top:344px;width:26.30000000000001px;height:20.399999999999977px;background:transparent;border:0.9px solid #c48a42"></div>
<svg style="left:0;top:0" width="784" height="432"><rect x="319.28" y="348.24" width="2.92" height="0.90" fill="#d8d8d8"/><rect x="328.56" y="348.24" width="2.92" height="0.90" fill="#d8d8d8"/><rect x="319.28" y="350.55" width="2.88" height="0.90" fill="#d8d8d8"/><rect x="328.56" y="350.55" width="2.92" height="0.90" fill="#d8d8d8"/><rect x="319.28" y="352.79" width="2.92" height="0.90" fill="#d8d8d8"/><rect x="328.56" y="352.79" width="2.92" height="0.90" fill="#d8d8d8"/><rect x="316.54" y="354.75" width="2.88" height="0.90" fill="#d8d8d8"/><rect x="322.24" y="354.75" width="2.84" height="0.90" fill="#d8d8d8"/><rect x="328.56" y="354.78" width="2.92" height="0.90" fill="#d8d8d8"/><rect x="319.28" y="356.59" width="2.96" height="0.90" fill="#d8d8d8"/><rect x="326.39" y="356.60" width="2.93" height="0.90" fill="#d8d8d8"/><rect x="330.74" y="356.60" width="2.99" height="0.90" fill="#d8d8d8"/><rect x="319.28" y="358.31" width="2.96" height="0.90" fill="#d8d8d8"/><rect x="319.28" y="360.03" width="2.96" height="0.90" fill="#d8d8d8"/><rect x="323.38" y="361.60" width="2.89" height="0.90" fill="#d8d8d8"/><path d="M377.5 395 L381.5 399 M379 399 H381.5 V396.5" fill="none" stroke="#9a9a9a" stroke-width="0.7"/></svg>
<div style="position:absolute;left:16px;top:408.8px;width:376px;height:9.0px;background:#121212;"></div>
<div style="position:absolute;left:35.5px;top:408.3px;width:356.5px;height:9.5px;background:#3a3a3a;"></div>
<div style="position:absolute;left:35.5px;top:407.6px;width:356.5px;height:0.6999999999999886px;background:#333335;"></div>
<svg style="left:0;top:0" width="784" height="432"><path d="M29 412 L30.5 413.3 L29 414.6 M31 412 L32.5 413.3 L31 414.6" fill="none" stroke="#ccc" stroke-width="0.7"/><circle cx="40.9" cy="412.6" r="3.2" fill="#2a9a40" opacity="0.6"/><circle cx="40.9" cy="412.6" r="2.5" fill="#2bb24c"/><path d="M40.1 411.1 L42.3 412.6 L40.1 414.1 Z" fill="#e8f8e8"/></svg>
<svg style="left:0;top:0" width="784" height="432"><g fill="#b8b8b8" opacity="1.0" font-family="Liberation Sans"><path d="M48.77 411.57 H52.33 M48.77 410.49 H52.66 M48.77 412.60 H52.66 M48.44 413.63 H52.90 M49.85 411.43 V413.77 M48.67 410.49 V414.71 M53.30 412.60 H58.00 M53.30 410.49 H58.00 M53.30 414.71 H57.43 M53.77 410.49 V413.77 M57.53 410.25 V414.95 M56.12 411.43 V414.95 M59.25 410.25 V414.95 M58.40 411.90 H59.81 M60.42 412.60 H62.86 M60.19 410.49 H62.53 M60.19 413.63 H62.86 M60.19 414.71 H62.53 M60.48 410.25 V414.95 M61.93 410.25 V413.77 M62.81 411.43 V413.77 M63.50 413.63 H67.96 M63.50 410.49 H67.96 M63.74 414.71 H67.96 M63.50 411.57 H67.63 M67.73 410.25 V414.71 M66.32 410.25 V414.71 M68.84 414.71 H73.30 M69.17 411.57 H72.73 M68.60 410.49 H73.06 M72.83 411.43 V414.71 M70.25 410.25 V413.77 M74.55 410.25 V414.95 M73.70 411.90 H75.11 M75.49 413.63 H78.40 M75.72 412.60 H78.16 M75.72 410.49 H78.40 M76.51 410.25 V413.77 M75.78 410.25 V413.77" stroke="#b8b8b8" stroke-width="0.55" fill="none"/></g></svg>
<svg style="left:0;top:0" width="784" height="432"><g fill="#8a8a8a" opacity="1.0" font-family="Liberation Sans"><path d="M187.14 413.93 H190.46 M187.14 412.47 H190.46 M187.31 411.71 H190.06 M187.48 412.37 V414.69 M190.12 411.71 V414.86 M191.34 411.54 V414.86 M190.74 412.70 H191.74 M192.00 412.47 H193.89 M192.00 414.69 H194.06 M192.17 411.71 H193.89 M192.21 411.71 V414.69 M193.23 411.54 V414.03" stroke="#8a8a8a" stroke-width="0.5" fill="none"/></g></svg>
<div class="tx" style="left:198.9px;top:410.252px;font-size:5.6px;color:#8c8c8c;">22.23ms</div>
<svg style="left:0;top:0" width="784" height="432"><circle cx="227" cy="413.2" r="2" fill="none" stroke="#7a7a7a" stroke-width="0.6"/><path d="M238.2 410.3 V416 M285.8 410.3 V416" stroke="#5a5a5a" stroke-width="0.6"/></svg>
<svg style="left:0;top:0" width="784" height="432"><g fill="#8a8a8a" opacity="1.0" font-family="Liberation Sans"><path d="M246.75 413.97 H250.07 M246.75 412.43 H250.07 M247.17 413.20 H250.07 M249.90 411.45 V414.95 M247.10 411.45 V414.07 M251.18 411.45 V414.95 M250.55 412.68 H251.60 M252.06 414.77 H253.87 M251.88 413.97 H254.05 M251.88 412.43 H253.63 M253.18 412.33 V414.77 M253.83 411.45 V414.77" stroke="#8a8a8a" stroke-width="0.5" fill="none"/></g></svg>
<div class="tx" style="left:260px;top:410.542px;font-size:5.1px;color:#8c8c8c;">8.12ms</div>
<svg style="left:0;top:0" width="784" height="432"><g fill="#8a8a8a" opacity="1.0" font-family="Liberation Sans"><path d="M293.81 413.20 H297.79 M294.12 411.21 H297.48 M293.81 414.17 H298.01 M297.57 411.21 V415.19 M296.24 410.99 V414.30 M299.19 410.99 V415.41 M298.39 412.54 H299.72 M300.29 411.21 H302.28 M300.60 414.17 H302.81 M300.07 413.20 H302.81 M302.53 410.99 V414.30 M301.71 411.21 V415.19 M301.03 411.21 V415.19" stroke="#8a8a8a" stroke-width="0.5" fill="none"/></g></svg>
<div class="tx" style="left:305.3px;top:410.426px;font-size:5.3px;color:#8c8c8c;">7.78ms</div>
<svg style="left:0;top:0" width="784" height="432"><path d="M327 413.2 H358.6" stroke="#7a7a7a" stroke-width="0.7"/><path d="M342.5 411.2 V415.2" stroke="#aaa" stroke-width="1"/><circle cx="363.3" cy="412.7" r="1.7" fill="none" stroke="#8a8a8a" stroke-width="0.6"/><path d="M364.5 414 L365.8 415.3" stroke="#8a8a8a" stroke-width="0.7"/></svg>
<div class="tx" style="left:370.6px;top:410.484px;font-size:5.2px;color:#8c8c8c;">100%</div>
<div style="position:absolute;left:392px;top:42.5px;width:376px;height:375.3px;background:#2c2c2c;"></div>
<div style="position:absolute;left:392px;top:42.5px;width:376px;height:15.299999999999997px;background:#3a3a3a;"></div>
<div style="position:absolute;left:392.6px;top:42.8px;width:34.39999999999998px;height:15.0px;background:linear-gradient(#5c5c5c,#4f4f4f);"></div>
<div style="position:absolute;left:392.6px;top:55.5px;width:34.39999999999998px;height:1.2999999999999972px;background:#b07c4c;"></div>
<svg style="left:0;top:0" width="784" height="432"><g fill="#f0f0f0" opacity="1.0" font-family="Liberation Sans"><path d="M403.50 52.20 H407.93 M403.50 50.97 H407.93 M403.87 48.63 H407.93 M403.23 47.40 H407.93 M405.10 48.47 V52.47 M408.03 48.47 V51.13 M406.43 47.13 V52.20 M409.30 49.80 H413.73 M409.67 52.20 H414.37 M409.67 48.63 H413.73 M409.03 50.97 H414.37 M413.83 48.47 V52.47 M410.90 47.40 V51.13" stroke="#f0f0f0" stroke-width="0.65" fill="none"/></g></svg>
<svg style="left:0;top:0" width="784" height="432"><g fill="#dcdcdc" opacity="1.0" font-family="Liberation Sans"><path d="M433.62 50.93 H438.16 M433.62 52.12 H438.78 M434.24 48.67 H438.16 M433.88 47.48 H438.16 M435.43 48.51 V52.12 M438.26 47.22 V52.38 M436.72 48.51 V52.12 M439.84 49.80 H443.76 M439.84 52.12 H443.76 M439.84 47.48 H444.12 M439.22 48.67 H444.12 M441.03 47.48 V52.38 M442.32 47.22 V52.38 M445.08 50.93 H449.72 M445.08 52.12 H449.72 M445.08 48.67 H449.98 M449.46 47.22 V52.12 M445.34 47.22 V52.12 M451.35 47.22 V52.38 M450.42 49.03 H451.97 M452.38 52.12 H454.96 M452.64 48.67 H455.58 M453.00 50.93 H455.32 M454.30 48.51 V52.38 M453.50 47.48 V52.38" stroke="#dcdcdc" stroke-width="0.6" fill="none"/></g></svg>
<div style="position:absolute;left:392px;top:57.8px;width:376px;height:15.799999999999997px;background:#393939;"></div>
<div style="position:absolute;left:427px;top:56.9px;width:341px;height:0.8999999999999986px;background:#303030;"></div>
<div style="position:absolute;left:397px;top:60px;width:55.19999999999999px;height:11.599999999999994px;background:#1a1a1a;border-radius:1px"></div>
<svg style="left:0;top:0" width="784" height="432"><g fill="#e8e8e8" opacity="1.0" font-family="Liberation Sans"><text x="418.20" y="67.94" font-size="5.4" font-weight="normal">1</text><text x="421.20" y="67.94" font-size="5.4" font-weight="normal">.</text><path d="M402.46 66.00 H407.18 M402.81 63.76 H406.59 M402.22 68.24 H406.59 M406.69 63.76 V68.48 M402.71 63.76 V67.24 M407.62 64.91 H411.99 M407.86 63.76 H412.34 M408.21 68.24 H412.34 M408.21 67.09 H412.34 M409.35 63.76 V68.24 M408.11 63.76 V67.24 M413.91 63.52 V68.48 M413.02 65.25 H414.51 M414.90 67.09 H417.74 M415.15 66.00 H417.74 M414.90 64.91 H417.74 M417.68 64.76 V68.48 M416.75 64.76 V68.24 M423.81 63.52 V68.48 M422.92 65.25 H424.41 M424.81 64.91 H427.89 M425.40 66.00 H427.29 M425.40 67.09 H427.29 M425.88 64.76 V67.24 M425.11 63.76 V68.24 M428.57 68.24 H432.69 M428.32 67.09 H433.04 M428.32 64.91 H433.29 M428.57 63.76 H432.69 M431.30 63.76 V68.24 M428.82 63.52 V68.24 M430.06 64.76 V68.24 M434.61 63.52 V68.48 M433.72 65.25 H435.21 M436.20 66.00 H438.09 M436.20 63.76 H438.69 M435.86 67.09 H438.44 M438.38 63.52 V67.24 M437.46 63.52 V68.24 M440.01 63.52 V68.48 M439.12 65.25 H440.61 M441.60 63.76 H444.09 M441.01 68.24 H443.84 M441.01 67.09 H444.09 M441.31 63.52 V68.48 M443.78 63.52 V68.24" stroke="#e8e8e8" stroke-width="0.6" fill="none"/></g></svg>
<svg style="left:0;top:0" width="784" height="432"><path d="M449.3 70.2 L451.2 68.3 L451.2 70.2 Z" fill="#ddd"/></svg>
<svg style="left:0;top:0" width="784" height="432"><rect x="693" y="63.5" width="7.5" height="5.5" fill="none" stroke="#767676" stroke-width="0.8"/><path d="M693 66.2 H700.5 M696.7 63.5 V69" stroke="#767676" stroke-width="0.6"/><path d="M706 62.5 V70" stroke="#4a4a4a" stroke-width="0.8"/><circle cx="713.8" cy="65.8" r="2.7" fill="none" stroke="#767676" stroke-width="0.8"/><path d="M715.8 67.8 L717.5 69.5" stroke="#767676" stroke-width="0.9"/><path d="M712.5 65.8 H715.1" stroke="#767676" stroke-width="0.6"/><circle cx="728.4" cy="65.8" r="2.7" fill="none" stroke="#767676" stroke-width="0.8"/><path d="M730.4 67.8 L732.1 69.5" stroke="#767676" stroke-width="0.9"/><path d="M727.1 65.8 H729.7" stroke="#767676" stroke-width="0.6"/><rect x="739.5" y="62.8" width="7.5" height="6.8" fill="none" stroke="#767676" stroke-width="0.8"/><path d="M741.3 64.8 V67.8 M743 64.8 L745.5 67.8" stroke="#767676" stroke-width="0.6"/><rect x="755" y="62.8" width="7.5" height="6.8" fill="none" stroke="#767676" stroke-width="0.8"/><path d="M756.5 68 L761 64 M758.5 64 H761 V66.5" fill="none" stroke="#767676" stroke-width="0.7"/></svg>
<div style="position:absolute;left:394px;top:73.6px;width:373px;height:252.4px;background:#1e1e1e;"></div>
<svg style="left:0;top:0" width="784" height="432"><path d="M394 77.2 H767" stroke="#282828" stroke-width="2.5" stroke-dasharray="2 2.2"/><path d="M394 322 H767" stroke="#2e2e2e" stroke-width="2.5" stroke-dasharray="2.5 2"/></svg>
<div style="position:absolute;left:394px;top:80.9px;width:372.20000000000005px;height:4.3999999999999915px;background:#8c8c8c;"></div>
<div class="tx" style="left:739.6px;top:77.42px;font-size:6px;color:#dadada;">752 * 480</div>
<div style="position:absolute;left:394px;top:85.3px;width:372.20000000000005px;height:232.59999999999997px;background:#f8f8f8;"></div>
<div style="position:absolute;left:682px;top:315.2px;width:84.20000000000005px;height:9.100000000000023px;background:#1e1e1e;"></div>
<div style="position:absolute;left:682px;top:315.2px;width:84.20000000000005px;height:2.1000000000000227px;background:#b0b0b0;"></div>
<div class="tx" style="left:682.3px;top:316.694px;font-size:5.7px;color:#e6e6e6;font-family:'Liberation Serif',serif;letter-spacing:-0.03px">X:0000 Y:0000 | R:000 G:000 B:000</div>
<div style="position:absolute;left:766.2px;top:73.6px;width:2.0px;height:251.9px;background:#505050;"></div>
<svg style="left:0;top:0" width="784" height="432"><path d="M400.6 195.3 L396.3 199.5 L400.6 203.6" fill="none" stroke="#a0a0a0" stroke-width="1"/><path d="M759.6 195.3 L763.9 199.5 L759.6 203.6" fill="none" stroke="#a0a0a0" stroke-width="1"/></svg>
<svg style="left:0;top:0" width="784" height="432"><rect x="428" y="145" width="298.5" height="149.5" fill="none" stroke="#a8d98a" stroke-width="0.9"/><path d="M448.2 223 L451 205 L454.4 190.3 L480 177.5 L506.5 165.3 L514.8 163 L530 165.5 L560 169.5 L600 171 L620 169 L630 166 L641.7 163.3 L653 167.4 L664.8 177.8 L678.7 190.5 L690.3 199.8 L693.75 210.2 L696 228.7 L692.6 233.3 L669.4 241.4 L640 249.7 L610.6 257.9 L596.3 265 L590.2 267.9 L590.9 274.1 L588.6 280.0 L583.9 284.1 L577.8 285.6 L571.7 284.1 L567.0 280.0 L564.7 274.1 L565.4 267.9 L561.6 266 L547.3 258.9 L516.7 249.7 L480 235.4 Z" fill="#424244"/><clipPath id="pc"><path d="M448.2 223 L451 205 L454.4 190.3 L480 177.5 L506.5 165.3 L514.8 163 L530 165.5 L560 169.5 L600 171 L620 169 L630 166 L641.7 163.3 L653 167.4 L664.8 177.8 L678.7 190.5 L690.3 199.8 L693.75 210.2 L696 228.7 L692.6 233.3 L669.4 241.4 L640 249.7 L610.6 257.9 L596.3 265 L590.2 267.9 L590.9 274.1 L588.6 280.0 L583.9 284.1 L577.8 285.6 L571.7 284.1 L567.0 280.0 L564.7 274.1 L565.4 267.9 L561.6 266 L547.3 258.9 L516.7 249.7 L480 235.4 Z"/></clipPath><g clip-path="url(#pc)"><path d="M446.0 224.0 L449.0 205.0 L453.0 190.0 L466.0 184.0 L466.0 226.0 Z" fill="#48484a"/><path d="M469.0 183.0 L477.0 180.0 L477.0 234.0 L469.0 230.0 Z" fill="#404042"/><path d="M481.0 177.0 L506.0 166.0 L515.0 165.0 L523.0 187.0 L484.0 186.0 Z" fill="#5e5e60"/><path d="M481.0 188.0 L523.0 188.0 L528.0 195.0 L481.0 195.0 Z" fill="#4e4e50"/><path d="M482.0 202.0 L532.0 203.0 L533.0 211.0 L481.0 211.0 Z" fill="#616163"/><path d="M479.0 219.0 L536.0 221.0 L546.0 236.0 L522.0 246.0 L479.0 234.0 Z" fill="#575759"/><path d="M449.0 224.0 L480.0 236.0 L518.0 250.0 L547.0 259.0 L540.0 252.0 L480.0 232.0 Z" fill="#505052"/><path d="M452 198 V213 M475.5 196 V206 M482.5 199 V207 M476 221 V229 M486 183 L500 176 M486 231 L520 240 M478 218 L520 220 M492 202 L520 203" stroke="#5ad830" stroke-width="1.2" fill="none"/><path d="M525.0 168.0 L545.0 170.0 L541.0 180.0 L528.0 186.0 Z" fill="#616163" stroke="#5ad830" stroke-width="1.0" stroke-linejoin="round"/><path d="M527.0 190.0 L538.0 184.0 L540.0 200.0 L530.0 206.0 Z" fill="#636365" stroke="#5ad830" stroke-width="1.0" stroke-linejoin="round"/><path d="M519.0 210.0 L536.0 212.0 L538.0 224.0 L522.0 222.0 Z" fill="#58585a" stroke="#5ad830" stroke-width="1.0" stroke-linejoin="round"/><circle cx="571.2" cy="207" r="34" fill="#262627" stroke="#5ad830" stroke-width="1"/><path d="M579.7 206.1 L602.1 204.5 L600.2 217.9 L579.1 210.1 Z" fill="#656567" stroke="#5ad830" stroke-width="1.5" stroke-linejoin="round"/><path d="M584.2 207.6 L598.7 208.1 L597.9 213.5 L583.9 210.0 Z" fill="#6b6b6d" stroke="#5ad830" stroke-width="0.8" stroke-linejoin="round"/><path d="M579.0 210.5 L599.2 220.3 L590.9 231.0 L576.5 213.7 Z" fill="#656567" stroke="#5ad830" stroke-width="1.5" stroke-linejoin="round"/><path d="M582.1 214.1 L594.5 221.7 L591.1 226.0 L580.7 215.9 Z" fill="#6b6b6d" stroke="#5ad830" stroke-width="0.8" stroke-linejoin="round"/><path d="M576.2 213.9 L588.8 232.5 L576.3 237.6 L572.4 215.4 Z" fill="#656567" stroke="#5ad830" stroke-width="1.5" stroke-linejoin="round"/><path d="M577.1 218.6 L584.0 231.3 L578.9 233.4 L575.0 219.4 Z" fill="#6b6b6d" stroke="#5ad830" stroke-width="0.8" stroke-linejoin="round"/><path d="M572.1 215.5 L573.7 237.9 L560.3 236.0 L568.1 214.9 Z" fill="#656567" stroke="#5ad830" stroke-width="1.5" stroke-linejoin="round"/><path d="M570.6 220.0 L570.1 234.5 L564.7 233.7 L568.2 219.7 Z" fill="#6b6b6d" stroke="#5ad830" stroke-width="0.8" stroke-linejoin="round"/><path d="M567.7 214.8 L557.9 235.0 L547.2 226.7 L564.5 212.3 Z" fill="#656567" stroke="#5ad830" stroke-width="1.5" stroke-linejoin="round"/><path d="M564.1 217.9 L556.5 230.3 L552.2 226.9 L562.3 216.5 Z" fill="#6b6b6d" stroke="#5ad830" stroke-width="0.8" stroke-linejoin="round"/><path d="M564.3 212.0 L545.7 224.6 L540.6 212.1 L562.8 208.2 Z" fill="#656567" stroke="#5ad830" stroke-width="1.5" stroke-linejoin="round"/><path d="M559.6 212.9 L546.9 219.8 L544.8 214.7 L558.8 210.8 Z" fill="#6b6b6d" stroke="#5ad830" stroke-width="0.8" stroke-linejoin="round"/><path d="M562.7 207.9 L540.3 209.5 L542.2 196.1 L563.3 203.9 Z" fill="#656567" stroke="#5ad830" stroke-width="1.5" stroke-linejoin="round"/><path d="M558.2 206.4 L543.7 205.9 L544.5 200.5 L558.5 204.0 Z" fill="#6b6b6d" stroke="#5ad830" stroke-width="0.8" stroke-linejoin="round"/><path d="M563.4 203.5 L543.2 193.7 L551.5 183.0 L565.9 200.3 Z" fill="#656567" stroke="#5ad830" stroke-width="1.5" stroke-linejoin="round"/><path d="M560.3 199.9 L547.9 192.3 L551.3 188.0 L561.7 198.1 Z" fill="#6b6b6d" stroke="#5ad830" stroke-width="0.8" stroke-linejoin="round"/><path d="M566.2 200.1 L553.6 181.5 L566.1 176.4 L570.0 198.6 Z" fill="#656567" stroke="#5ad830" stroke-width="1.5" stroke-linejoin="round"/><path d="M565.3 195.4 L558.4 182.7 L563.5 180.6 L567.4 194.6 Z" fill="#6b6b6d" stroke="#5ad830" stroke-width="0.8" stroke-linejoin="round"/><path d="M570.3 198.5 L568.7 176.1 L582.1 178.0 L574.3 199.1 Z" fill="#656567" stroke="#5ad830" stroke-width="1.5" stroke-linejoin="round"/><path d="M571.8 194.0 L572.3 179.5 L577.7 180.3 L574.2 194.3 Z" fill="#6b6b6d" stroke="#5ad830" stroke-width="0.8" stroke-linejoin="round"/><path d="M574.7 199.2 L584.5 179.0 L595.2 187.3 L577.9 201.7 Z" fill="#656567" stroke="#5ad830" stroke-width="1.5" stroke-linejoin="round"/><path d="M578.3 196.1 L585.9 183.7 L590.2 187.1 L580.1 197.5 Z" fill="#6b6b6d" stroke="#5ad830" stroke-width="0.8" stroke-linejoin="round"/><path d="M578.1 202.0 L596.7 189.4 L601.8 201.9 L579.6 205.8 Z" fill="#656567" stroke="#5ad830" stroke-width="1.5" stroke-linejoin="round"/><path d="M582.8 201.1 L595.5 194.2 L597.6 199.3 L583.6 203.2 Z" fill="#6b6b6d" stroke="#5ad830" stroke-width="0.8" stroke-linejoin="round"/><circle cx="571.2" cy="207" r="7" fill="#3a3a3b" stroke="#5ad830" stroke-width="0.9"/><circle cx="571.2" cy="207" r="5" fill="#e8ece4" stroke="#5ad830" stroke-width="1.3"/><path d="M520 187 Q512 212 520 236 Q528 246 540 250" stroke="#5ad830" stroke-width="4.6" fill="none"/><path d="M520 187 Q512 212 520 236 Q528 246 540 250" stroke="#1e1e1f" stroke-width="2.8" fill="none"/><path d="M592 190 Q608 176 630 181" stroke="#5ad830" stroke-width="4.4" fill="none"/><path d="M592 190 Q608 176 630 181" stroke="#1e1e1f" stroke-width="2.6" fill="none"/><path d="M470.0 211.5 L536.0 217.5 L539.0 228.5 L470.0 222.0 Z" fill="#6a6a6c" stroke="#5ad830" stroke-width="1.2" stroke-linejoin="round"/><path d="M600.0 222.5 L650.0 221.0 L699.0 219.5 L699.0 230.5 L650.0 232.5 L600.0 235.0 Z" fill="#6a6a6c" stroke="#5ad830" stroke-width="1.2" stroke-linejoin="round"/><path d="M548.0 171.0 L596.0 173.0 L590.0 178.0 L552.0 178.0 Z" fill="#636365" stroke="#5ad830" stroke-width="1.0" stroke-linejoin="round"/><path d="M542.0 242.0 L556.0 246.0 L560.0 258.0 L547.0 256.0 Z" fill="#616163" stroke="#5ad830" stroke-width="1.0" stroke-linejoin="round"/><path d="M600.0 238.0 L612.0 236.0 L608.0 252.0 L596.0 254.0 Z" fill="#636365" stroke="#5ad830" stroke-width="1.0" stroke-linejoin="round"/><path d="M548.0 262.0 L562.0 262.0 L566.0 272.0 L560.0 266.0 Z" fill="#555557" stroke="#5ad830" stroke-width="0.9" stroke-linejoin="round"/><path d="M604.0 176.0 L628.0 170.0 L634.0 186.0 L620.0 196.0 L606.0 190.0 Z" fill="#656567" stroke="#5ad830" stroke-width="1.1" stroke-linejoin="round"/><path d="M608.0 198.0 L632.0 205.0 L634.0 221.0 L609.0 221.0 Z" fill="#6b6b6d" stroke="#5ad830" stroke-width="1.2" stroke-linejoin="round"/><path d="M638.0 207.0 L665.0 205.0 L665.0 217.0 L638.0 218.0 Z" fill="#68686a" stroke="#5ad830" stroke-width="1.2" stroke-linejoin="round"/><path d="M612.0 225.0 L665.0 221.0 L665.0 237.0 L640.0 247.0 L612.0 250.0 Z" fill="#656567" stroke="#5ad830" stroke-width="1.2" stroke-linejoin="round"/><path d="M652.0 172.0 L663.0 180.0 L665.0 200.0 L646.0 202.0 L652.0 188.0 Z" fill="#666668" stroke="#5ad830" stroke-width="1.1" stroke-linejoin="round"/><path d="M667.0 186.0 L673.0 186.0 L673.0 201.0 L667.0 201.0 Z" fill="#636365" stroke="#5ad830" stroke-width="1.0" stroke-linejoin="round"/><path d="M667.0 204.0 L673.0 204.0 L673.0 217.0 L667.0 217.0 Z" fill="#636365" stroke="#5ad830" stroke-width="1.0" stroke-linejoin="round"/><path d="M667.0 219.0 L673.0 219.0 L673.0 228.0 L667.0 228.0 Z" fill="#636365" stroke="#5ad830" stroke-width="1.0" stroke-linejoin="round"/><path d="M667.0 230.0 L673.0 230.0 L673.0 239.0 L667.0 239.0 Z" fill="#636365" stroke="#5ad830" stroke-width="1.0" stroke-linejoin="round"/><path d="M675.0 186.0 L680.0 186.0 L680.0 201.0 L675.0 201.0 Z" fill="#636365" stroke="#5ad830" stroke-width="1.0" stroke-linejoin="round"/><path d="M675.0 204.0 L680.0 204.0 L680.0 217.0 L675.0 217.0 Z" fill="#636365" stroke="#5ad830" stroke-width="1.0" stroke-linejoin="round"/><path d="M675.0 219.0 L680.0 219.0 L680.0 228.0 L675.0 228.0 Z" fill="#636365" stroke="#5ad830" stroke-width="1.0" stroke-linejoin="round"/><path d="M675.0 230.0 L680.0 230.0 L680.0 239.0 L675.0 239.0 Z" fill="#636365" stroke="#5ad830" stroke-width="1.0" stroke-linejoin="round"/><path d="M682.0 186.0 L687.0 186.0 L687.0 201.0 L682.0 201.0 Z" fill="#636365" stroke="#5ad830" stroke-width="1.0" stroke-linejoin="round"/><path d="M682.0 204.0 L687.0 204.0 L687.0 217.0 L682.0 217.0 Z" fill="#636365" stroke="#5ad830" stroke-width="1.0" stroke-linejoin="round"/><path d="M682.0 219.0 L687.0 219.0 L687.0 228.0 L682.0 228.0 Z" fill="#636365" stroke="#5ad830" stroke-width="1.0" stroke-linejoin="round"/><path d="M682.0 230.0 L687.0 230.0 L687.0 239.0 L682.0 239.0 Z" fill="#636365" stroke="#5ad830" stroke-width="1.0" stroke-linejoin="round"/><path d="M689.0 186.0 L694.0 186.0 L694.0 201.0 L689.0 201.0 Z" fill="#636365" stroke="#5ad830" stroke-width="1.0" stroke-linejoin="round"/><path d="M689.0 204.0 L694.0 204.0 L694.0 217.0 L689.0 217.0 Z" fill="#636365" stroke="#5ad830" stroke-width="1.0" stroke-linejoin="round"/><path d="M689.0 219.0 L694.0 219.0 L694.0 228.0 L689.0 228.0 Z" fill="#636365" stroke="#5ad830" stroke-width="1.0" stroke-linejoin="round"/><path d="M689.0 230.0 L694.0 230.0 L694.0 239.0 L689.0 239.0 Z" fill="#636365" stroke="#5ad830" stroke-width="1.0" stroke-linejoin="round"/><path d="M597 176 L636 204 L664 203" stroke="#1e1e1e" stroke-width="4" fill="none"/><circle cx="516" cy="176.8" r="10.5" fill="#3e3e40" stroke="#5ad830" stroke-width="1.5"/><circle cx="522.2" cy="179.1" r="2.3" fill="#6a6a6c" stroke="#5ad830" stroke-width="0.8"/><circle cx="518.1" cy="183.1" r="2.3" fill="#6a6a6c" stroke="#5ad830" stroke-width="0.8"/><circle cx="512.4" cy="182.4" r="2.3" fill="#6a6a6c" stroke="#5ad830" stroke-width="0.8"/><circle cx="509.4" cy="177.5" r="2.3" fill="#6a6a6c" stroke="#5ad830" stroke-width="0.8"/><circle cx="511.4" cy="172.1" r="2.3" fill="#6a6a6c" stroke="#5ad830" stroke-width="0.8"/><circle cx="516.8" cy="170.2" r="2.3" fill="#6a6a6c" stroke="#5ad830" stroke-width="0.8"/><circle cx="521.6" cy="173.4" r="2.3" fill="#6a6a6c" stroke="#5ad830" stroke-width="0.8"/><circle cx="516" cy="176.8" r="3.1" fill="#1e1e1e" stroke="#5ad830" stroke-width="1.5"/><circle cx="641.2" cy="177.8" r="12" fill="#3e3e40" stroke="#5ad830" stroke-width="1.5"/><circle cx="648.3" cy="180.4" r="2.6" fill="#6a6a6c" stroke="#5ad830" stroke-width="0.8"/><circle cx="643.6" cy="185.0" r="2.6" fill="#6a6a6c" stroke="#5ad830" stroke-width="0.8"/><circle cx="637.1" cy="184.2" r="2.6" fill="#6a6a6c" stroke="#5ad830" stroke-width="0.8"/><circle cx="633.7" cy="178.6" r="2.6" fill="#6a6a6c" stroke="#5ad830" stroke-width="0.8"/><circle cx="635.9" cy="172.4" r="2.6" fill="#6a6a6c" stroke="#5ad830" stroke-width="0.8"/><circle cx="642.1" cy="170.3" r="2.6" fill="#6a6a6c" stroke="#5ad830" stroke-width="0.8"/><circle cx="647.7" cy="173.9" r="2.6" fill="#6a6a6c" stroke="#5ad830" stroke-width="0.8"/><circle cx="641.2" cy="177.8" r="3.6" fill="#1e1e1e" stroke="#5ad830" stroke-width="1.5"/><circle cx="577.8" cy="272.4" r="12.2" fill="#3e3e40" stroke="#5ad830" stroke-width="1.5"/><circle cx="585.0" cy="275.0" r="2.7" fill="#6a6a6c" stroke="#5ad830" stroke-width="0.8"/><circle cx="580.2" cy="279.7" r="2.7" fill="#6a6a6c" stroke="#5ad830" stroke-width="0.8"/><circle cx="573.6" cy="278.9" r="2.7" fill="#6a6a6c" stroke="#5ad830" stroke-width="0.8"/><circle cx="570.2" cy="273.2" r="2.7" fill="#6a6a6c" stroke="#5ad830" stroke-width="0.8"/><circle cx="572.4" cy="266.9" r="2.7" fill="#6a6a6c" stroke="#5ad830" stroke-width="0.8"/><circle cx="578.8" cy="264.8" r="2.7" fill="#6a6a6c" stroke="#5ad830" stroke-width="0.8"/><circle cx="584.4" cy="268.4" r="2.7" fill="#6a6a6c" stroke="#5ad830" stroke-width="0.8"/><circle cx="577.8" cy="272.4" r="3.7" fill="#1e1e1e" stroke="#5ad830" stroke-width="1.5"/><circle cx="627.5" cy="228.8" r="3.4" fill="#1e1e1e" stroke="#5ad830" stroke-width="1.3"/><rect x="579.6" y="248.4" width="11.4" height="10.6" fill="#d6f2c4" stroke="#5ad830" stroke-width="1.2"/><path d="M583 251 V255.5 H588 V251" fill="none" stroke="#5ad830" stroke-width="0.8"/></g><path d="M448.2 223 L451 205 L454.4 190.3 L480 177.5 L506.5 165.3 L514.8 163 L530 165.5 L560 169.5 L600 171 L620 169 L630 166 L641.7 163.3 L653 167.4 L664.8 177.8 L678.7 190.5 L690.3 199.8 L693.75 210.2 L696 228.7 L692.6 233.3 L669.4 241.4 L640 249.7 L610.6 257.9 L596.3 265 L590.2 267.9 L590.9 274.1 L588.6 280.0 L583.9 284.1 L577.8 285.6 L571.7 284.1 L567.0 280.0 L564.7 274.1 L565.4 267.9 L561.6 266 L547.3 258.9 L516.7 249.7 L480 235.4 Z" fill="none" stroke="#5ad830" stroke-width="2.2" stroke-linejoin="round"/><text x="628" y="227.6" font-family="Liberation Sans" font-size="6.2" fill="#74e040" opacity="0.85">R 7 MODEL 5455325</text><text x="699.3" y="228.3" font-family="Liberation Sans" font-size="8" fill="#6cd83c">5455325-05</text></svg>
<div style="position:absolute;left:392px;top:326px;width:376px;height:17px;background:#3a3a3a;"></div>
<div style="position:absolute;left:392.2px;top:326.3px;width:31.400000000000034px;height:16.19999999999999px;background:#555555;"></div>
<div style="position:absolute;left:392.2px;top:341.4px;width:31.400000000000034px;height:1.1000000000000227px;background:#b88048;"></div>
<svg style="left:0;top:0" width="784" height="432"><g fill="#eeeeee" opacity="1.0" font-family="Liberation Sans"><path d="M396.23 335.67 H400.93 M396.87 334.50 H400.93 M396.87 332.10 H401.30 M399.43 332.10 V337.17 M401.03 331.83 V337.17 M402.03 335.67 H407.37 M402.03 336.90 H407.37 M402.03 332.10 H407.10 M406.83 331.83 V335.83 M403.90 332.10 V336.90 M405.23 331.83 V337.17 M408.79 331.83 V337.17 M407.83 333.70 H409.43 M409.86 335.67 H413.17 M410.50 332.10 H412.90 M409.86 333.33 H412.53 M409.86 336.90 H413.17 M412.84 333.17 V337.17 M411.02 331.83 V337.17 M413.90 332.10 H418.70 M413.63 334.50 H418.97 M414.27 333.33 H418.33 M414.17 332.10 V337.17 M415.50 333.17 V336.90 M416.83 333.17 V336.90" stroke="#eeeeee" stroke-width="0.6" fill="none"/></g></svg>
<svg style="left:0;top:0" width="784" height="432"><g fill="#d8d8d8" opacity="1.0" font-family="Liberation Sans"><path d="M429.19 331.83 V337.17 M428.23 333.70 H429.83 M430.90 335.67 H432.93 M430.90 336.90 H432.93 M430.90 334.50 H433.30 M430.59 331.83 V336.90 M431.42 331.83 V336.90 M434.67 335.67 H439.10 M434.03 332.10 H439.10 M434.30 336.90 H439.10 M435.90 333.17 V337.17 M434.57 333.17 V335.83 M437.23 332.10 V336.90 M440.79 331.83 V337.17 M439.83 333.70 H441.43 M442.13 336.90 H444.90 M442.50 332.10 H445.17 M442.50 335.67 H444.53 M442.13 334.50 H444.53 M443.02 331.83 V336.90 M443.84 331.83 V336.90 M444.84 331.83 V337.17 M446.59 331.83 V337.17 M445.63 333.70 H447.23 M447.93 333.33 H450.97 M447.66 335.67 H450.70 M448.30 332.10 H450.33 M449.64 331.83 V335.83 M448.82 333.17 V336.90 M450.64 333.17 V336.90" stroke="#d8d8d8" stroke-width="0.6" fill="none"/></g></svg>
<svg style="left:0;top:0" width="784" height="432"><g fill="#d8d8d8" opacity="1.0" font-family="Liberation Sans"><path d="M468.19 331.83 V337.17 M467.23 333.70 H468.83 M469.53 334.50 H472.57 M469.90 333.33 H471.93 M469.90 332.10 H472.30 M471.24 331.83 V336.90 M469.59 331.83 V337.17 M473.30 332.10 H478.37 M473.67 333.33 H478.10 M473.30 336.90 H478.37 M476.23 332.10 V335.83 M474.90 332.10 V337.17" stroke="#d8d8d8" stroke-width="0.6" fill="none"/></g></svg>
<div style="position:absolute;left:392px;top:343px;width:376px;height:74.80000000000001px;background:#3d3d3d;"></div>
<div style="position:absolute;left:392px;top:343px;width:376px;height:6.199999999999989px;background:#383838;"></div>
<div style="position:absolute;left:397.8px;top:349.2px;width:367.2px;height:13.800000000000011px;background:#686868;"></div>
<div style="position:absolute;left:397.8px;top:363px;width:367.2px;height:15.800000000000011px;background:#4a4a4a;"></div>
<svg style="left:0;top:0" width="784" height="432"><path d="M420.7 349.2 V363" stroke="#5e5e5e" stroke-width="0.8"/><path d="M420.7 363 V378.8" stroke="#444" stroke-width="0.8"/><path d="M462.8 349.2 V363" stroke="#5e5e5e" stroke-width="0.8"/><path d="M462.8 363 V378.8" stroke="#444" stroke-width="0.8"/><path d="M506 349.2 V363" stroke="#5e5e5e" stroke-width="0.8"/><path d="M506 363 V378.8" stroke="#444" stroke-width="0.8"/><path d="M538 349.2 V363" stroke="#5e5e5e" stroke-width="0.8"/><path d="M538 363 V378.8" stroke="#444" stroke-width="0.8"/><path d="M570 349.2 V363" stroke="#5e5e5e" stroke-width="0.8"/><path d="M570 363 V378.8" stroke="#444" stroke-width="0.8"/><path d="M591 349.2 V363" stroke="#5e5e5e" stroke-width="0.8"/><path d="M591 363 V378.8" stroke="#444" stroke-width="0.8"/><path d="M614.8 349.2 V363" stroke="#5e5e5e" stroke-width="0.8"/><path d="M614.8 363 V378.8" stroke="#444" stroke-width="0.8"/><path d="M641.5 349.2 V363" stroke="#5e5e5e" stroke-width="0.8"/><path d="M641.5 363 V378.8" stroke="#444" stroke-width="0.8"/><path d="M666.7 349.2 V363" stroke="#5e5e5e" stroke-width="0.8"/><path d="M666.7 363 V378.8" stroke="#444" stroke-width="0.8"/><path d="M689 349.2 V363" stroke="#5e5e5e" stroke-width="0.8"/><path d="M689 363 V378.8" stroke="#444" stroke-width="0.8"/></svg>
<svg style="left:0;top:0" width="784" height="432"><g fill="#d8d8d8" opacity="1.0" font-family="Liberation Sans"><path d="M403.45 358.70 H408.52 M403.45 357.47 H408.25 M403.82 355.13 H408.52 M403.18 356.30 H408.52 M403.72 354.97 V357.63 M407.98 353.63 V358.97 M409.48 356.30 H414.18 M410.12 353.90 H414.18 M409.75 357.47 H414.18 M414.28 353.90 V357.63 M412.68 353.90 V357.63 M411.35 354.97 V357.63" stroke="#d8d8d8" stroke-width="0.55" fill="none"/></g></svg>
<svg style="left:0;top:0" width="784" height="432"><g fill="#d8d8d8" opacity="1.0" font-family="Liberation Sans"><text x="452.17" y="358.39" font-size="5.8" font-weight="normal">X</text><path d="M427.46 353.90 H432.53 M427.46 355.13 H432.53 M427.46 356.30 H432.27 M432.00 354.97 V358.70 M427.73 354.97 V358.97 M434.46 353.63 V358.97 M433.50 355.50 H435.10 M436.17 353.90 H438.57 M436.17 358.70 H438.83 M435.53 355.13 H438.19 M435.86 353.63 V358.70 M436.68 353.63 V358.97 M438.50 354.97 V358.97 M439.80 355.13 H444.87 M439.80 358.70 H444.87 M440.44 353.90 H445.13 M443.00 353.90 V358.97 M444.60 353.63 V358.70 M447.06 353.63 V358.97 M446.10 355.50 H447.70 M448.77 355.13 H451.43 M448.77 353.90 H451.43 M448.13 357.47 H451.43 M448.77 356.30 H450.79 M450.11 353.63 V358.97 M451.10 353.90 V357.63" stroke="#d8d8d8" stroke-width="0.55" fill="none"/></g></svg>
<svg style="left:0;top:0" width="784" height="432"><g fill="#d8d8d8" opacity="1.0" font-family="Liberation Sans"><text x="494.82" y="358.39" font-size="5.8" font-weight="normal">Y</text><path d="M470.49 355.13 H474.92 M470.49 353.90 H475.18 M469.85 357.47 H474.92 M471.72 354.97 V358.70 M474.65 353.90 V358.70 M473.05 353.63 V357.63 M477.11 353.63 V358.97 M476.15 355.50 H477.75 M478.18 353.90 H481.22 M478.18 358.70 H481.48 M478.82 356.30 H481.22 M478.51 353.63 V357.63 M481.15 353.90 V357.63 M480.16 353.63 V357.63 M483.09 356.30 H487.14 M482.45 353.90 H487.52 M482.45 357.47 H487.14 M485.65 354.97 V358.97 M482.98 354.97 V358.97 M488.75 358.70 H494.08 M489.01 355.13 H493.44 M488.75 353.90 H493.44 M491.95 353.90 V358.97 M489.28 354.97 V358.70" stroke="#d8d8d8" stroke-width="0.55" fill="none"/></g></svg>
<svg style="left:0;top:0" width="784" height="432"><g fill="#d8d8d8" opacity="1.0" font-family="Liberation Sans"><text x="529.27" y="358.39" font-size="5.8" font-weight="normal">X</text><path d="M511.56 353.63 V358.97 M510.60 355.50 H512.20 M513.27 358.70 H515.29 M513.27 356.30 H515.29 M512.89 353.90 H515.67 M512.63 357.47 H515.29 M515.60 353.90 V357.63 M512.96 353.63 V357.63 M513.78 353.90 V357.63 M516.90 356.30 H522.23 M517.54 353.90 H522.23 M517.54 357.47 H522.23 M518.77 353.63 V357.63 M520.10 353.90 V358.70 M521.70 353.90 V357.63 M523.84 355.13 H527.89 M523.20 358.70 H528.53 M523.84 353.90 H528.53 M523.73 353.90 V357.63 M525.07 353.90 V358.97 M528.00 353.63 V358.97" stroke="#d8d8d8" stroke-width="0.55" fill="none"/></g></svg>
<svg style="left:0;top:0" width="784" height="432"><g fill="#d8d8d8" opacity="1.0" font-family="Liberation Sans"><text x="561.27" y="358.39" font-size="5.8" font-weight="normal">Y</text><path d="M542.60 353.90 H547.67 M542.60 358.70 H547.93 M542.86 355.13 H547.29 M545.80 353.63 V357.63 M543.13 353.90 V358.97 M547.40 353.90 V358.97 M548.90 356.30 H553.97 M549.54 355.13 H554.23 M549.54 353.90 H553.59 M549.43 354.97 V357.63 M553.70 353.90 V357.63 M550.77 354.97 V358.70 M555.84 357.47 H560.27 M555.20 358.70 H560.27 M555.46 353.90 H559.89 M555.20 356.30 H559.89 M555.73 353.63 V357.63 M560.00 353.90 V358.97" stroke="#d8d8d8" stroke-width="0.55" fill="none"/></g></svg>
<svg style="left:0;top:0" width="784" height="432"><g fill="#d8d8d8" opacity="1.0" font-family="Liberation Sans"><path d="M574.43 355.13 H579.77 M574.70 353.90 H579.13 M574.70 356.30 H579.13 M574.43 357.47 H579.77 M576.30 353.63 V358.70 M574.97 353.90 V358.97 M581.69 353.63 V358.97 M580.73 355.50 H582.33 M582.76 356.30 H586.07 M582.76 355.13 H586.07 M583.03 357.47 H585.43 M583.09 354.97 V358.70 M583.92 353.63 V357.63" stroke="#d8d8d8" stroke-width="0.55" fill="none"/></g></svg>
<svg style="left:0;top:0" width="784" height="432"><g fill="#d8d8d8" opacity="1.0" font-family="Liberation Sans"><path d="M597.79 353.63 V358.97 M596.83 355.50 H598.43 M598.86 357.47 H602.17 M598.86 358.70 H601.53 M599.50 355.13 H602.17 M600.84 354.97 V358.97 M600.02 353.63 V358.70 M604.09 353.63 V358.97 M603.13 355.50 H604.73 M605.43 356.30 H608.47 M605.43 353.90 H608.20 M605.43 358.70 H608.47 M605.49 353.90 V358.70 M608.14 353.90 V357.63 M606.32 353.90 V357.63" stroke="#d8d8d8" stroke-width="0.55" fill="none"/></g></svg>
<svg style="left:0;top:0" width="784" height="432"><g fill="#d8d8d8" opacity="1.0" font-family="Liberation Sans"><text x="632.27" y="358.39" font-size="5.8" font-weight="normal">X</text><path d="M620.86 353.63 V358.97 M619.90 355.50 H621.50 M622.19 353.90 H625.23 M622.19 357.47 H624.97 M622.19 355.13 H624.59 M623.08 353.63 V358.70 M624.90 354.97 V358.97 M626.46 356.30 H631.53 M626.20 353.90 H631.27 M626.46 355.13 H631.53 M631.00 353.63 V358.70 M628.07 353.63 V358.70 M629.40 353.63 V358.70" stroke="#d8d8d8" stroke-width="0.55" fill="none"/></g></svg>
<svg style="left:0;top:0" width="784" height="432"><g fill="#d8d8d8" opacity="1.0" font-family="Liberation Sans"><text x="658.22" y="358.39" font-size="5.8" font-weight="normal">Y</text><path d="M646.11 356.30 H650.92 M646.11 358.70 H651.18 M645.85 353.90 H650.92 M646.11 355.13 H650.92 M647.72 353.90 V358.97 M649.05 354.97 V358.97 M653.11 353.63 V358.97 M652.15 355.50 H653.75 M654.44 355.13 H657.22 M654.82 356.30 H656.84 M654.44 358.70 H656.84 M654.18 357.47 H657.22 M657.15 353.63 V357.63 M656.16 353.63 V358.97 M655.33 353.63 V358.70" stroke="#d8d8d8" stroke-width="0.55" fill="none"/></g></svg>
<svg style="left:0;top:0" width="784" height="432"><g fill="#d8d8d8" opacity="1.0" font-family="Liberation Sans"><path d="M672.05 358.70 H676.85 M671.78 355.13 H676.48 M671.78 353.90 H676.85 M672.32 353.90 V357.63 M673.65 353.63 V357.63 M676.58 353.90 V358.70 M679.04 353.63 V358.97 M678.08 355.50 H679.68 M680.75 357.47 H683.42 M680.75 356.30 H683.15 M680.11 355.13 H682.78 M683.09 353.63 V357.63 M681.27 353.90 V357.63" stroke="#d8d8d8" stroke-width="0.55" fill="none"/></g></svg>
<div class="tx" style="left:397.8px;width:22.899999999999977px;top:369.8px;font-size:5.8px;color:#c4c4c4;text-align:center">0</div>
<div class="tx" style="left:420.7px;width:42.10000000000002px;top:369.8px;font-size:5.8px;color:#c4c4c4;text-align:center">369.998</div>
<div class="tx" style="left:462.8px;width:43.19999999999999px;top:369.8px;font-size:5.8px;color:#c4c4c4;text-align:center">282.003</div>
<div class="tx" style="left:506px;width:32px;top:369.8px;font-size:5.8px;color:#c4c4c4;text-align:center">369.529</div>
<div class="tx" style="left:538px;width:32px;top:369.8px;font-size:5.8px;color:#c4c4c4;text-align:center">280.801</div>
<div class="tx" style="left:570px;width:21px;top:369.8px;font-size:5.8px;color:#c4c4c4;text-align:center">0.000</div>
<div class="tx" style="left:591px;width:23.799999999999955px;top:369.8px;font-size:5.8px;color:#c4c4c4;text-align:center">1.000</div>
<div class="tx" style="left:614.8px;width:26.700000000000045px;top:369.8px;font-size:5.8px;color:#c4c4c4;text-align:center">1.000</div>
<div class="tx" style="left:641.5px;width:25.200000000000045px;top:369.8px;font-size:5.8px;color:#c4c4c4;text-align:center">1.000</div>
<div class="tx" style="left:666.7px;width:22.299999999999955px;top:369.8px;font-size:5.8px;color:#c4c4c4;text-align:center">0.996</div>
</div></body></html>
